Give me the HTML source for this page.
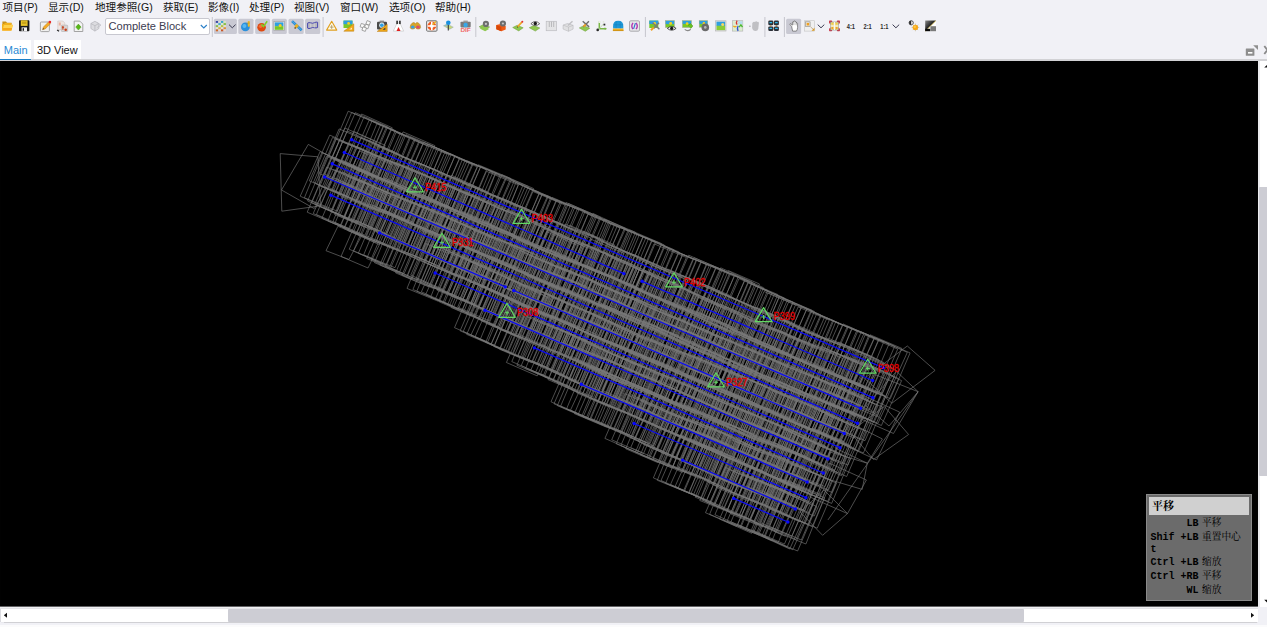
<!DOCTYPE html>
<html lang="zh"><head><meta charset="utf-8"><title>Main</title>
<style>
*{box-sizing:border-box;margin:0;padding:0}
html,body{width:1267px;height:627px;overflow:hidden;background:#f1f1f6}
body{position:relative;font-family:"Liberation Sans","Noto Sans CJK SC",sans-serif;font-size:11px;color:#1a1a1a}
.abs{position:absolute}
.menu span{position:absolute;top:0.3px;height:14px;line-height:14px;white-space:nowrap;font-size:10.6px;color:#111}
.cv{position:absolute;left:0;top:61px}
.tb{position:absolute;left:0;top:0;z-index:3}
.sep{position:absolute;top:18px;width:1px;height:17px;background:#c4c4cc}
.combo{position:absolute;left:105px;top:18px;width:105px;height:17px;background:#fff;border:1px solid #c8c8d0;border-radius:2px;font-size:11.1px;line-height:15.5px;padding-left:2.5px;color:#3c3c50}
.tab1{position:absolute;left:0;top:40px;width:31.3px;height:20.2px;background:#fff;border-bottom:1.5px solid #1a7fc8;color:#2a8ad4;font-size:11px;line-height:19.4px;padding-top:1px;text-align:center}
.tln{position:absolute;left:0;top:59.4px;width:1267px;height:1.6px;background:#d2d2d5}
.tab2{position:absolute;left:33.8px;top:40px;width:47px;height:19.2px;background:#fff;font-size:11px;line-height:19.4px;padding-top:1px;text-align:center;color:#111}
.vsb{position:absolute;left:1258px;top:61px;width:9px;height:545.5px;background:#fff;border-left:2px solid #ececef}
.vth{position:absolute;left:1259.3px;top:187.4px;width:8px;height:289px;background:#cdcdd4;border-radius:1px 0 0 1px}
.hsb{position:absolute;left:0;top:606.5px;width:1258px;height:2.2px;background:linear-gradient(#f6f6f8,#dedee2)}
.hbl{position:absolute;left:0;top:625px;width:1267px;height:2px;background:#fbfbfc}
.htr{position:absolute;left:0.8px;top:608.6px;width:1257px;height:13.2px;background:#fff;box-shadow:0 0.6px 0.8px #d0d0d4,-0.8px 0 0 #d8d8dc}
.hth{position:absolute;left:227.6px;top:608.8px;width:796px;height:12.8px;background:#cdcdd4;border-radius:1px}
.tip{position:absolute;left:1146px;top:494px;width:106px;height:107px;background:#6b6b6b;border:1px solid #8a8a8a;font-family:"Liberation Mono","Noto Serif CJK SC",monospace;font-size:10px;font-weight:bold;color:#000}
.tip .h{position:absolute;left:2px;top:2px;width:100px;height:18px;background:#d0d0d0;font-weight:bold;font-size:11px;line-height:18px;padding-left:3px;font-family:"Liberation Serif","Noto Serif CJK SC",serif}
.tip div.r{position:absolute;left:3.5px;white-space:pre;line-height:12px}
.tip .c{font-weight:normal;font-size:9.7px;margin-left:3.5px}
</style></head><body>

<div class="menu">
<span style="left:2.5px">项目(P)</span>
<span style="left:48px">显示(D)</span>
<span style="left:95px">地理参照(G)</span>
<span style="left:163px">获取(E)</span>
<span style="left:208px">影像(I)</span>
<span style="left:249px">处理(P)</span>
<span style="left:294px">视图(V)</span>
<span style="left:340px">窗口(W)</span>
<span style="left:389px">选项(O)</span>
<span style="left:435px">帮助(H)</span>
</div>
<svg class="tb" width="1267" height="60" viewBox="0 0 1267 60">
<rect x="211.8" y="17" width="1" height="20" fill="#c6c6ce"/>
<rect x="322.6" y="17" width="1" height="20" fill="#c6c6ce"/>
<rect x="475.3" y="17" width="1" height="20" fill="#c6c6ce"/>
<rect x="644.9" y="17" width="1" height="20" fill="#c6c6ce"/>
<rect x="764.4" y="17" width="1" height="20" fill="#c6c6ce"/>
<rect x="783.9" y="17" width="1" height="20" fill="#c6c6ce"/>
<rect x="213.9" y="18.7" width="23.0" height="15.2" rx="1.5" fill="#c9c9d3"/>
<rect x="238.3" y="18.7" width="15.2" height="15.2" rx="1.5" fill="#c9c9d3"/>
<rect x="255.2" y="18.7" width="14.8" height="15.2" rx="1.5" fill="#c9c9d3"/>
<rect x="271.9" y="18.7" width="14.9" height="15.2" rx="1.5" fill="#c9c9d3"/>
<rect x="288.5" y="18.7" width="15.2" height="15.2" rx="1.5" fill="#c9c9d3"/>
<rect x="305.1" y="18.7" width="15.1" height="15.2" rx="1.5" fill="#c9c9d3"/>
<rect x="786.1" y="18.7" width="15.0" height="15.2" rx="1.5" fill="#c9c9d3"/>
<g transform="translate(2.0 20.5)"><path d="M0.4 1h3.6l1 1.2h4.6v2H0.4z" fill="#c8901a"/><path d="M0 10V3.6h2l1-1h6.3v1.6h1.6L9.4 10z" fill="#f2b21c"/><path d="M0.3 10L2 4.6h9L9.3 10z" fill="#ffd24e"/><path d="M0.3 10L1.2 7.4h9L9.3 10z" fill="#f6a81a"/></g>
<g transform="translate(18.8 20.0)"><rect x="0.2" y="0.3" width="10.4" height="11" rx="0.8" fill="#1c1c1c"/><rect x="2" y="0.3" width="6.8" height="5.6" fill="#e8c428"/><rect x="3.2" y="1.6" width="4.4" height="2.4" fill="#c8a41c"/><rect x="2.8" y="7.4" width="5.4" height="3.9" fill="#f2f2f2"/><rect x="3.8" y="8.2" width="1.4" height="2.6" fill="#1c1c1c"/></g>
<g transform="translate(39.9 20.5)"><rect x="0.5" y="1.5" width="9" height="9.6" rx="1" fill="#f0f0f0" stroke="#9c9c9c" stroke-width="0.9"/><path d="M2.6 9.2L3.4 6.6L8.6 1.4L10.6 3.2L5.4 8.4Z" fill="#f2aa28" stroke="#b87a18" stroke-width="0.4"/><circle cx="10" cy="1.6" r="1.3" fill="#e8282c"/><path d="M2.6 9.2L3.2 7.4L4.4 8.6Z" fill="#5a4a3a"/></g>
<g transform="translate(56.3 20.5)"><path d="M1.5 0.5h5l2 2V9h-7z" fill="#efe6e2" stroke="#c8bcb8" stroke-width="0.5"/><rect x="2.5" y="2" width="2" height="3" fill="#e8b0a0"/><rect x="5" y="4.6" width="6.4" height="6.4" rx="0.8" fill="#d8d4d4" stroke="#a8a4a4" stroke-width="0.5"/><path d="M6.6 5.6v3.6M5.6 6.8h2.2" stroke="#c8401a" stroke-width="1.1" fill="none"/><circle cx="9.4" cy="9.2" r="1.3" fill="#c8401a"/><path d="M0.8 9.4l2 1.4" stroke="#2a2a2a" stroke-width="1.2"/></g>
<g transform="translate(73.7 20.5)"><path d="M0.5 0.6h5.6l3 3V11H0.5z" fill="#f4f4f4" stroke="#9a9a9a" stroke-width="0.9"/><path d="M4.7 3.6L7.4 6.6L4.7 9.6L2 6.6Z" fill="#58b818" stroke="#3c8a10" stroke-width="0.4"/></g>
<g transform="translate(89.9 20.5)"><path d="M1 3L5 0.8L9 3V8L5 10.6L1 8Z" fill="#dcdce0" stroke="#b4b4ba" stroke-width="0.7"/><path d="M1 3L5 5.2L9 3M5 5.2V10.6" stroke="#b4b4ba" stroke-width="0.7" fill="none"/><path d="M7.4 2.2L11 4.6L7.4 7" fill="none" stroke="#c0c0c6" stroke-width="0.9"/></g>
<g transform="translate(215.8 21.0)"><rect x="0.00" y="0.00" width="2.3" height="1.9" fill="#3a48a8"/><rect x="2.60" y="0.00" width="2.3" height="1.9" fill="#d8d8dc"/><rect x="5.20" y="0.00" width="2.3" height="1.9" fill="#38a8c8"/><rect x="7.80" y="0.00" width="2.3" height="1.9" fill="#d8e8c8"/><rect x="0.00" y="2.10" width="2.3" height="1.9" fill="#d0e4e8"/><rect x="2.60" y="2.10" width="2.3" height="1.9" fill="#3cb4c8"/><rect x="5.20" y="2.10" width="2.3" height="1.9" fill="#dce8d0"/><rect x="7.80" y="2.10" width="2.3" height="1.9" fill="#88c040"/><rect x="0.00" y="4.20" width="2.3" height="1.9" fill="#8cc040"/><rect x="2.60" y="4.20" width="2.3" height="1.9" fill="#e0e0d8"/><rect x="5.20" y="4.20" width="2.3" height="1.9" fill="#b0c838"/><rect x="7.80" y="4.20" width="2.3" height="1.9" fill="#e8e0c8"/><rect x="0.00" y="6.30" width="2.3" height="1.9" fill="#e8e4d0"/><rect x="2.60" y="6.30" width="2.3" height="1.9" fill="#e0b430"/><rect x="5.20" y="6.30" width="2.3" height="1.9" fill="#e8dcd0"/><rect x="7.80" y="6.30" width="2.3" height="1.9" fill="#e09030"/><rect x="0.00" y="8.40" width="2.3" height="1.9" fill="#d06828"/><rect x="2.60" y="8.40" width="2.3" height="1.9" fill="#e8d8d0"/><rect x="5.20" y="8.40" width="2.3" height="1.9" fill="#c85828"/><rect x="7.80" y="8.40" width="2.3" height="1.9" fill="#e8d4d0"/></g>
<g transform="translate(240.2 20.5)"><circle cx="5.2" cy="6.4" r="4.4" fill="#2a90dc"/><circle cx="4.2" cy="5.4" r="2" fill="#58b8f0"/><rect x="7.6" y="0.6" width="2" height="5.6" rx="0.6" fill="#e8b82c"/><path d="M6.4 2.6h3" stroke="#b88a1c" stroke-width="0.6"/></g>
<g transform="translate(256.8 20.5)"><circle cx="4.8" cy="6.8" r="4.3" fill="#e04a10"/><circle cx="3.8" cy="5.8" r="1.8" fill="#f07038"/><path d="M4.6 3.8l2 2.2L10.4 0.8" fill="none" stroke="#7cd028" stroke-width="1.5"/></g>
<g transform="translate(273.6 20.8)"><rect x="0.3" y="0.8" width="10.4" height="9" fill="#e8e8e8" stroke="#9a9a9a" stroke-width="0.6"/><rect x="1.2" y="1.6" width="8.6" height="4" fill="#2f9fe0"/><rect x="1.2" y="5.4" width="8.6" height="3.6" fill="#78c828"/><circle cx="6.6" cy="4.6" r="1.5" fill="#f4d020"/></g>
<g transform="translate(290.6 20.5)"><path d="M1.4 0.6L11 9.8" stroke="#2a8cd4" stroke-width="2.6"/><path d="M1.4 0.6L11 9.8" stroke="#58b0e8" stroke-width="0.8"/><rect x="4.4" y="4" width="3.2" height="3.2" transform="rotate(45 6 5.6)" fill="#e8b020"/><circle cx="4.6" cy="7.4" r="0.9" fill="#7a5a20"/></g>
<g transform="translate(307.0 20.5)"><path d="M0.6 2.6Q2 1.6 3.8 2.4T7.4 2.2T10.6 1.8V7Q9 7.8 7.4 7.2T3.8 7.6T0.6 7.6Z" fill="#b8b8c0" stroke="#4a48b0" stroke-width="1"/><path d="M3.8 3v4M7.2 3v4" stroke="#e8e8e8" stroke-width="0.6"/></g>
<g transform="translate(326.2 20.5)"><path d="M5.5 0.8L10.6 9.6H0.4Z" fill="#fffbe8" stroke="#e0a020" stroke-width="1.1" stroke-linejoin="round"/><path d="M5.5 4.4v4M3.6 6.6h3.8" stroke="#a89058" stroke-width="0.8"/></g>
<g transform="translate(343.2 20.2)"><rect x="0.3" y="0.4" width="9" height="7.4" fill="#78c828"/><rect x="0.3" y="0.4" width="9" height="3.6" fill="#2f9fe0"/><circle cx="5.4" cy="3.2" r="1.4" fill="#f4d020"/><path d="M0.6 11L10.6 3.6V11Z" fill="#f0a818" stroke="#b87a10" stroke-width="0.5"/><path d="M6 9.4L8.8 7.2V9.4Z" fill="#fff0c0"/></g>
<g transform="translate(359.8 20.5)"><g fill="#fafafa" stroke="#8c8c8c" stroke-width="0.7"><rect x="6.6" y="0.6" width="3.6" height="3.6" transform="rotate(20 8.4 2.4)"/><rect x="0.8" y="3.4" width="3.6" height="3.6" transform="rotate(20 2.6 5.2)"/><rect x="5.2" y="4.2" width="3.6" height="3.6" transform="rotate(20 7 6)"/><rect x="2.6" y="6.8" width="3.6" height="3.6" transform="rotate(20 4.4 8.6)"/></g></g>
<g transform="translate(376.6 20.2)"><rect x="0.4" y="1.6" width="10" height="7.6" rx="1" fill="#4a4a4a"/><rect x="3" y="0.4" width="4.4" height="2" fill="#8a8a8a"/><circle cx="5.2" cy="5" r="2.6" fill="#d8e8f0"/><circle cx="5.2" cy="5" r="1.8" fill="#2f9fe0"/><path d="M0.6 11.2L10.6 4V11.2Z" fill="#f0a818" stroke="#b87a10" stroke-width="0.5"/><path d="M6 9.6L8.8 7.4V9.6Z" fill="#3a3a3a"/></g>
<g transform="translate(392.9 20.5)"><path d="M4.2 2.6L0.4 10.6h10.4L7 2.6z" fill="#ffffff" stroke="#b8b8b8" stroke-width="0.5"/><rect x="3.4" y="0.2" width="1.6" height="3.4" fill="#2a2a2a"/><rect x="6.2" y="0.2" width="1.6" height="3.4" fill="#2a2a2a"/><path d="M5.6 6.6L7.6 10.6H3.6Z" fill="#e02020"/></g>
<g transform="translate(409.8 22.1)"><path d="M0.4 5.4Q0.2 2.6 2.6 0.8Q4.4 -0.2 5.6 1.6Q6.8 -0.2 8.6 0.8Q11 2.6 10.8 5.4Q10.6 7 8.4 7Q6.4 7 5.6 5.4Q4.8 7 2.8 7Q0.6 7 0.4 5.4Z" fill="#d8a428" stroke="#a87a18" stroke-width="0.5"/><ellipse cx="3" cy="4.8" rx="1.9" ry="1.5" fill="#38a0e0"/><ellipse cx="8.2" cy="4.8" rx="1.9" ry="1.5" fill="#e04868"/></g>
<g transform="translate(426.1 20.2)"><rect x="0.5" y="0.6" width="10.4" height="10.4" rx="1" fill="#f0f0f0" stroke="#707070" stroke-width="1"/><circle cx="5.7" cy="5.8" r="3.2" fill="none" stroke="#f05a20" stroke-width="2.4"/><path d="M5.7 1.6v8.4M1.5 5.8h8.4" stroke="#ffffff" stroke-width="1.6"/><path d="M6.4 4.6L9.8 1.2" stroke="#e8b020" stroke-width="1.4"/></g>
<g transform="translate(443.1 20.2)"><path d="M0.4 5.6L4 3.8L10.2 7L6.6 9Z" fill="#c8d878" stroke="#98a8a8" stroke-width="0.5"/><path d="M0.6 5.6L3.6 4.2L5 6.4Z" fill="#88b8d8"/><path d="M5.2 4v6.4" stroke="#3a3a3a" stroke-width="1.1"/><circle cx="5.2" cy="2.6" r="2.3" fill="#1890e0"/></g>
<g transform="translate(460.2 20.0)"><rect x="0.3" y="1.8" width="10.2" height="5.6" rx="0.8" fill="#7a7a7a"/><rect x="3.2" y="0.6" width="4.4" height="1.8" fill="#9a9a9a"/><circle cx="5.4" cy="5" r="2.2" fill="#38a8e8"/><text x="0.2" y="11.6" font-family="'Liberation Sans',sans-serif" font-weight="bold" font-size="5.6" fill="#f06a6a" textLength="10.4" lengthAdjust="spacingAndGlyphs">DIF</text></g>
<g transform="translate(479.1 20.5)"><path d="M0 6.2L4.5 4L10.5 6.5L6 9.6Z" fill="#8fc850" stroke="#6a9a3a" stroke-width="0.5"/><path d="M0.6 8L5 6L10 8.4L6 10.8Z" fill="#8fc850"/><circle cx="6.8" cy="3.4" r="3.1" fill="#6e6e6e"/><circle cx="6.8" cy="3.4" r="1.1" fill="#c8c8c8"/></g>
<g transform="translate(495.9 20.5)"><path d="M0.4 4.6L4.6 3.6L9.8 5.4V9L5.4 10.8L0.4 8.8Z" fill="#f05a14"/><path d="M0.4 4.6L5.4 6.4V10.8L0.4 8.8Z" fill="#d84808"/><circle cx="7" cy="3" r="3.1" fill="#6e6e6e"/><circle cx="7" cy="3" r="1.1" fill="#c8c8c8"/></g>
<g transform="translate(512.7 20.5)"><path d="M0 7L4.5 4.8L10.5 7.3L6 10.4Z" fill="#8fc850" stroke="#6a9a3a" stroke-width="0.5"/><path d="M4.8 6.4L9.2 1.6" stroke="#f0a828" stroke-width="1.7"/><circle cx="9.6" cy="1.2" r="1" fill="#e03030"/><path d="M4.2 7.2l0.4-1.4l1 1z" fill="#4a3a2a"/></g>
<g transform="translate(529.3 20.5)"><path d="M0 7.2L4.5 5L10.5 7.5L6 10.6Z" fill="#8fc850" stroke="#6a9a3a" stroke-width="0.5"/><path d="M1.6 3.2Q6 -1.2 10.4 3.2Q6 7 1.6 3.2Z" fill="#f4f4f4" stroke="#3a3a3a" stroke-width="0.7"/><circle cx="6" cy="3" r="1.7" fill="#1a1a1a"/></g>
<g transform="translate(545.9 20.8)"><rect x="0.3" y="0.5" width="10.4" height="9.4" fill="#e4e4e6" stroke="#bcbcc0" stroke-width="0.7"/><path d="M3.4 0.8v5.4M5.6 0.8v5.4M7.8 0.8v5.4" stroke="#b4b4b8" stroke-width="0.9"/></g>
<g transform="translate(562.5 20.5)"><path d="M0.6 4.6L5 3L10.6 4.8V8.6L6 10.8L0.6 8.6Z" fill="#e0e0e2" stroke="#b8b8bc" stroke-width="0.6"/><path d="M0.6 4.6L6 6.6L10.6 4.8M6 6.6V10.8" stroke="#b8b8bc" stroke-width="0.6" fill="none"/><path d="M5.4 5L10 0.8" stroke="#c0c0c4" stroke-width="1.5"/></g>
<g transform="translate(579.3 20.5)"><path d="M0 7.4L4.5 5.2L10.5 7.7L6 10.8Z" fill="#8fc850" stroke="#6a9a3a" stroke-width="0.5"/><path d="M3.4 0.8L9.8 6.4M9.6 0.8L4 6.4" stroke="#6e6e6e" stroke-width="1.4"/><path d="M4.2 6.2L6.4 4" stroke="#f0a020" stroke-width="1.8"/></g>
<g transform="translate(595.9 20.5)"><path d="M3.4 0.8v7.4h7" fill="none" stroke="#7ab848" stroke-width="1.5"/><path d="M3.4 8.2L7.4 3.6" stroke="#b8d8a0" stroke-width="0.8"/><circle cx="3.4" cy="1.4" r="1.2" fill="#e8f0e0"/><circle cx="7.6" cy="1.4" r="0.9" fill="#e0e8d8"/><rect x="7.6" y="3.2" width="1.8" height="1.8" fill="#2a2a2a"/><circle cx="1.8" cy="9.4" r="1.3" fill="#2a2a2a"/><path d="M8.8 6.8L10.8 8.2L8.8 9.6Z" fill="#7ab848"/></g>
<g transform="translate(612.7 20.2)"><path d="M0.4 8.4V6Q0.4 0.6 5.5 0.6T10.6 6V8.4Z" fill="#1e98d8"/><path d="M0.4 4.6h10.2M3.4 1.2v7M7.6 1.2v7" stroke="#1478b0" stroke-width="0.4"/><rect x="0.2" y="8.4" width="10.6" height="2.4" fill="#f0b020"/><path d="M0.2 10.4h10.6" stroke="#b88010" stroke-width="0.6"/></g>
<g transform="translate(629.0 20.2)"><rect x="0.5" y="0.6" width="10" height="10.4" rx="1.2" fill="#e6e6e8" stroke="#a4a4a8" stroke-width="0.9"/><path d="M4 2.6Q1.6 5.8 4 9M7 2.6Q9.6 5.8 7 9" fill="none" stroke="#b030b0" stroke-width="1.3"/><path d="M6.4 3L4.6 8.6" stroke="#2a70d0" stroke-width="1.1"/></g>
<g transform="translate(649.0 20.2)"><rect x="0.3" y="0.4" width="9" height="7.4" fill="#78c828"/><rect x="0.3" y="0.4" width="9" height="3.4" fill="#2f9fe0"/><circle cx="5.6" cy="3.2" r="1.4" fill="#f4d020"/><path d="M3.6 2.6L10.4 9M10 2.6L4.6 8.2" stroke="#7a7a7a" stroke-width="1.5"/><path d="M2 10L4.8 7.2" stroke="#f0a020" stroke-width="2"/></g>
<g transform="translate(665.1 20.2)"><rect x="0.3" y="0.4" width="9" height="7" fill="#78c828" stroke="#a8a8a8" stroke-width="0.5"/><rect x="0.6" y="0.7" width="8.4" height="3.2" fill="#2f9fe0"/><circle cx="5.6" cy="3.2" r="1.4" fill="#f4d020"/><path d="M2.2 8.2Q6.6 4.4 11 8.2Q6.6 11.8 2.2 8.2Z" fill="#f4f4f4" stroke="#2a2a2a" stroke-width="0.8"/><circle cx="6.6" cy="8.2" r="1.6" fill="#1a1a1a"/></g>
<g transform="translate(682.1 20.2)"><rect x="0.3" y="0.4" width="9" height="7" fill="#78c828" stroke="#a8a8a8" stroke-width="0.5"/><rect x="0.6" y="0.7" width="8.4" height="3" fill="#2f9fe0"/><circle cx="5" cy="3.4" r="1.3" fill="#f4d020"/><path d="M6 5.4L8.4 3.4L10.8 5.8L8.6 8.4" fill="#68c020" stroke="#489010" stroke-width="0.5"/><path d="M2.6 9.2Q5.6 11.6 8.6 9" fill="none" stroke="#8a8a8a" stroke-width="1.2"/></g>
<g transform="translate(698.9 20.2)"><rect x="0.3" y="0.4" width="8.4" height="6.6" fill="#78c828" stroke="#a8a8a8" stroke-width="0.5"/><rect x="0.6" y="0.7" width="7.8" height="3" fill="#2f9fe0"/><circle cx="5" cy="3.2" r="1.3" fill="#f4d020"/><circle cx="6.4" cy="7.2" r="3.8" fill="#6a6a6a"/><circle cx="6.4" cy="7.2" r="1.3" fill="#b8b8b8"/></g>
<g transform="translate(715.3 20.5)"><rect x="0.3" y="0.3" width="10.4" height="10.2" fill="#e0e0e0" stroke="#b0b0b0" stroke-width="0.6"/><rect x="1.2" y="1.2" width="8.6" height="4.4" fill="#2f9fe0"/><rect x="1.2" y="5.2" width="8.6" height="4.4" fill="#88cc38"/><circle cx="7.4" cy="4" r="1.5" fill="#f4d860"/></g>
<g transform="translate(732.1 20.2)"><rect x="0.3" y="0.5" width="10.4" height="10.4" fill="#dcecd0" stroke="#b0b0b0" stroke-width="0.6"/><rect x="6" y="1" width="4.4" height="3" fill="#b8dcf0"/><path d="M5 0.4Q3.6 2.4 5 4.4" fill="none" stroke="#d83030" stroke-width="1.2"/><path d="M6.2 5.6Q4.4 8 6 10.8" fill="none" stroke="#3050d0" stroke-width="1.2"/><path d="M1.2 5.6Q2.6 7.4 4.4 6" fill="none" stroke="#f0a820" stroke-width="1.3"/><path d="M7 7L8.8 4.6L10.4 7" fill="none" stroke="#48b830" stroke-width="1.3"/></g>
<g transform="translate(748.9 20.5)"><path d="M3.4 2.6Q5 0.4 6 1.6Q7.4 0 8.4 1.4Q9.8 0.6 10 2.6L9.4 8.2Q8.8 10.6 6.4 10.4Q4 10.4 3.2 7.4Z" fill="#c0c0c4"/><circle cx="1" cy="5.8" r="0.8" fill="#a8a8ac"/></g>
<g transform="translate(768.1 20.2)"><path d="M2.7 2.7H8.3V8.5H2.7Z" fill="none" stroke="#f0a020" stroke-width="0.8"/><rect x="0.2" y="0.4" width="5" height="4.6" rx="1.2" fill="#2c3038"/><rect x="1.3" y="1.7" width="2.8" height="1.4" rx="0.5" fill="#30b8e8"/><rect x="5.8" y="0.4" width="5" height="4.6" rx="1.2" fill="#2c3038"/><rect x="6.9" y="1.7" width="2.8" height="1.4" rx="0.5" fill="#30b8e8"/><rect x="0.2" y="6.2" width="5" height="4.6" rx="1.2" fill="#2c3038"/><rect x="1.3" y="7.5" width="2.8" height="1.4" rx="0.5" fill="#30b8e8"/><rect x="5.8" y="6.2" width="5" height="4.6" rx="1.2" fill="#2c3038"/><rect x="6.9" y="7.5" width="2.8" height="1.4" rx="0.5" fill="#30b8e8"/></g>
<g transform="translate(789.0 20.5)"><path d="M2.6 5.8L1 4.2Q0.6 3 1.8 3.2L3.4 4.6V1.6Q4 0.6 4.6 1.6V0.9Q5.4 0 6 0.9V1.4Q6.8 0.6 7.4 1.6V2.6Q8.2 2 8.6 3V7Q8.4 9.4 7.4 10.6H3.6Q3.2 8.6 2.6 5.8Z" fill="#ffffff" stroke="#4a4a4a" stroke-width="0.6"/><path d="M4.6 1.8V4.6M6 1.4V4.6M7.4 2V4.8" stroke="#7a7a7a" stroke-width="0.4"/></g>
<g transform="translate(804.1 20.2)"><rect x="0.4" y="0.5" width="10" height="10.4" fill="#f0f0f0" stroke="#c4c4c4" stroke-width="0.6"/><rect x="1.2" y="1.6" width="4.8" height="4.6" fill="#e8e0d0" stroke="#8a8a8a" stroke-width="0.6"/><rect x="2.6" y="2.8" width="2.4" height="2.4" fill="#f0a020"/><path d="M10.4 7.6V10.6H7.4Z" fill="#d89820"/><path d="M6.4 6.6L9 9" stroke="#b8a078" stroke-width="0.8"/></g>
<g transform="translate(828.9 20.2)"><g fill="#c83040"><rect x="0.2" y="0.4" width="3" height="3" rx="0.6"/><rect x="8" y="0.4" width="3" height="3" rx="0.6"/><rect x="0.2" y="8" width="3" height="3" rx="0.6"/><rect x="8" y="8" width="3" height="3" rx="0.6"/></g><rect x="1.6" y="1.8" width="8" height="8" fill="#ecd890" stroke="#8a8a8a" stroke-width="0.6"/><path d="M5.6 1.8v8M1.6 5.8h8" stroke="#f8f8f0" stroke-width="1"/><circle cx="3.4" cy="7.8" r="1.1" fill="#f0a020"/><circle cx="7.8" cy="7.8" r="1.1" fill="#f0a020"/><circle cx="3.4" cy="3.6" r="1" fill="#f4d040"/><circle cx="7.8" cy="3.6" r="1" fill="#f4d040"/></g>
<g transform="translate(908.4 20.2)"><circle cx="2.8" cy="2.6" r="2.1" fill="#f4f4f4" stroke="#2a2a2a" stroke-width="0.8"/><path d="M2.8 0.5A2.1 2.1 0 0 0 2.8 4.7Z" fill="#2a2a2a"/><path d="M7 3.4v7.6M3.2 7.2h7.6M4.3 4.5l5.4 5.4M9.7 4.5L4.3 9.9" stroke="#c8c0a0" stroke-width="0.9"/><circle cx="7" cy="7.2" r="2.7" fill="#f8a818"/><circle cx="6.4" cy="6.6" r="1.2" fill="#fcc848"/></g>
<g transform="translate(925.0 20.2)"><defs><linearGradient id="cg" x1="0" y1="0" x2="1" y2="1"><stop offset="0" stop-color="#8a8a8a"/><stop offset="0.5" stop-color="#1a1a1a"/><stop offset="1" stop-color="#000"/></linearGradient></defs><rect x="0.2" y="0.4" width="10.8" height="10.6" fill="#fff"/><path d="M0.2 0.4H11L0.2 11Z" fill="url(#cg)"/><path d="M0.2 11L11 0.4" stroke="#e8c850" stroke-width="0.7"/><rect x="5.4" y="6" width="5.6" height="5" fill="#7a7a7a"/><rect x="0.2" y="8.6" width="5" height="2.4" fill="#0a0a0a"/></g>
<path d="M200.8 25l3 3l3-3" fill="none" stroke="#2a7fc8" stroke-width="1.1"/>
<path d="M229.0 24.6l3.3 3.2l3.3-3.2" fill="none" stroke="#3a3a50" stroke-width="1"/>
<path d="M817.7 24.6l3.3 3.2l3.3-3.2" fill="none" stroke="#3a3a50" stroke-width="1"/>
<path d="M892.6 24.6l3.3 3.2l3.3-3.2" fill="none" stroke="#3a3a50" stroke-width="1"/>
<text x="846.8" y="29" font-family="'Liberation Sans',sans-serif" font-weight="bold" font-size="6.6" fill="#2a2a2a" textLength="8.2" lengthAdjust="spacingAndGlyphs">4:1</text>
<text x="863.5" y="29" font-family="'Liberation Sans',sans-serif" font-weight="bold" font-size="6.6" fill="#2a2a2a" textLength="8.2" lengthAdjust="spacingAndGlyphs">2:1</text>
<text x="880.3" y="29" font-family="'Liberation Sans',sans-serif" font-weight="bold" font-size="6.6" fill="#2a2a2a" textLength="8.2" lengthAdjust="spacingAndGlyphs">1:1</text>
<rect x="1245.8" y="48.4" width="8.6" height="7.4" rx="0.6" fill="#8e8e8e"/><rect x="1248" y="52" width="4.4" height="1.6" fill="#fff"/><path d="M1253.2 45.3h4.8v4.6z" fill="#8e8e8e"/>
<path d="M1264.3 46l6 8m0-8l-6 8" stroke="#8a8a8a" stroke-width="1.8"/>
</svg>
<div class="combo">Complete Block</div>
<div class="tln"></div><div class="tab1">Main</div><div class="tab2">3D View</div>
<svg class="cv" width="1258" height="545.6" viewBox="0 61 1258 545.6">
<rect x="0" y="61" width="1258" height="545.6" fill="#000"/>
<g fill="none" stroke="#787878" stroke-width="1.0" stroke-opacity="0.64">
<path d="M351.7 112.4L383.7 126.1L364.5 170.7L332.5 157.0ZM361.6 114.0L392.3 127.8L371.7 173.5L341.1 159.7ZM369.2 120.1L400.0 133.6L380.4 178.0L349.6 164.5ZM376.9 123.9L409.4 137.5L390.2 183.1L357.8 169.5ZM386.3 127.2L418.9 141.2L399.2 187.1L366.6 173.1ZM396.0 132.5L428.7 146.4L409.7 191.1L377.0 177.2ZM405.9 134.6L437.0 148.0L417.8 192.5L386.7 179.1ZM413.7 140.1L447.0 153.9L428.3 199.1L394.9 185.3ZM423.5 142.2L455.0 155.8L435.9 200.3L404.4 186.7ZM432.2 146.2L465.0 160.6L444.9 206.5L412.0 192.2ZM442.1 150.9L472.9 164.4L453.4 208.7L422.6 195.2ZM449.5 153.3L480.5 166.9L460.4 212.7L429.4 199.1ZM459.5 158.0L492.9 172.4L473.3 217.8L439.9 203.4ZM467.3 160.8L500.1 175.1L480.4 220.4L447.5 206.1ZM478.3 164.8L510.7 178.4L491.6 223.7L459.3 210.1ZM486.5 171.3L518.3 184.9L499.2 229.8L467.4 216.2ZM495.6 172.7L528.3 186.5L508.7 232.8L476.0 218.9ZM506.5 177.8L539.8 192.4L519.9 238.1L486.6 223.5ZM515.9 182.6L548.3 196.2L529.5 241.1L497.1 227.5ZM525.0 187.0L556.5 200.8L536.8 245.6L505.4 231.8ZM532.9 191.5L566.3 205.6L547.1 251.1L513.7 237.0ZM542.3 194.1L574.6 208.0L555.1 253.1L522.8 239.1ZM552.1 197.4L585.0 211.5L565.2 257.7L532.3 243.6ZM560.2 202.0L593.5 216.0L573.9 262.3L540.6 248.3ZM568.5 203.5L601.0 217.7L581.2 263.5L548.6 249.4ZM577.6 208.3L609.8 222.0L590.0 268.4L557.9 254.7ZM587.9 214.2L619.8 228.0L600.7 272.5L568.7 258.7ZM595.0 216.6L627.9 230.8L608.5 275.8L575.6 261.5ZM604.5 219.2L635.5 232.3L616.1 278.1L585.1 265.0ZM611.1 223.2L642.9 236.6L623.8 282.2L592.0 268.9ZM620.7 226.7L652.2 240.5L632.2 286.2L600.7 272.4ZM629.5 229.9L661.6 243.6L641.9 289.9L609.8 276.2ZM636.9 234.5L670.0 248.7L650.4 294.5L617.3 280.3ZM646.0 237.6L679.1 252.0L659.1 298.0L626.1 283.6ZM654.0 243.8L686.4 257.5L667.4 302.5L635.0 288.9ZM664.6 246.8L696.1 260.3L676.9 305.0L645.4 291.4ZM672.9 250.3L706.3 264.1L687.5 309.6L654.1 295.8ZM682.8 254.2L716.0 268.0L697.4 312.9L664.2 299.2ZM694.1 257.8L725.0 270.8L706.2 315.6L675.2 302.6ZM701.3 262.2L734.2 276.3L714.7 321.7L681.8 307.6ZM711.6 265.3L744.9 280.3L724.6 325.3L691.4 310.4ZM720.7 267.8L752.1 281.9L731.8 327.1L700.4 313.0ZM728.4 270.6L759.5 284.0L739.6 330.1L708.5 316.7ZM734.4 275.9L767.7 290.4L748.1 335.2L714.8 320.6ZM744.4 280.5L777.8 294.5L758.6 340.0L725.3 326.0ZM751.7 284.0L784.6 298.0L764.8 344.1L732.0 330.0ZM761.2 288.6L793.2 302.2L774.2 347.2L742.1 333.7ZM768.0 292.9L801.3 307.5L781.1 353.5L747.8 338.8ZM779.6 296.2L812.0 310.3L792.5 355.2L760.0 341.1ZM789.2 300.7L820.6 314.8L800.4 360.0L769.0 345.9ZM798.1 306.9L829.3 320.2L810.1 365.1L778.9 351.7ZM806.8 309.1L839.0 323.1L819.3 368.2L787.2 354.1ZM816.7 313.7L848.0 327.5L828.3 372.6L796.9 358.8ZM827.0 317.9L857.8 331.2L838.3 376.3L807.5 363.0ZM835.7 321.9L868.8 335.2L850.2 381.3L817.1 368.0ZM847.5 326.1L878.9 339.8L859.0 385.3L827.6 371.7ZM856.9 330.2L889.0 344.0L869.1 390.2L837.1 376.5ZM865.1 335.0L897.7 349.1L878.2 394.3L845.6 380.2ZM874.7 337.7L907.3 352.4L887.0 397.4L854.4 382.8Z"/>
<path d="M348.2 111.2L380.5 124.9L361.2 170.1L328.9 156.4ZM355.3 112.7L387.7 126.8L367.7 172.9L335.2 158.8ZM363.9 117.3L395.3 130.5L376.0 176.2L344.7 163.0ZM372.0 121.0L404.1 134.6L385.1 179.7L353.0 166.1ZM383.4 125.7L415.2 139.6L395.3 185.3L363.4 171.5ZM390.8 129.7L423.3 143.4L404.0 188.8L371.6 175.1ZM403.0 131.9L434.8 145.6L415.0 191.3L383.2 177.5ZM410.5 137.4L441.7 150.2L423.0 195.9L391.8 183.1ZM419.6 141.8L450.8 155.4L431.3 200.2L400.1 186.6ZM427.8 144.0L459.8 158.3L439.5 203.6L407.5 189.3ZM438.7 148.8L469.5 162.5L449.8 206.8L419.0 193.2ZM445.0 152.2L477.2 166.9L457.1 211.2L424.9 196.6ZM454.8 156.2L486.5 169.9L467.0 214.8L435.4 201.0ZM462.3 159.5L495.8 172.8L477.5 219.1L443.9 205.8ZM472.6 163.1L505.6 177.7L485.3 223.4L452.4 208.9ZM480.8 166.4L514.3 180.7L494.9 226.0L461.4 211.7ZM489.6 171.7L522.9 185.4L504.1 231.1L470.8 217.4ZM501.9 174.7L533.5 188.5L513.5 234.3L481.9 220.5ZM511.2 180.4L542.1 194.3L521.7 240.0L490.7 226.1ZM518.6 184.2L550.9 197.1L532.3 243.7L500.0 230.7ZM529.8 189.1L561.4 203.3L541.2 248.3L509.7 234.1ZM539.1 193.2L570.0 206.2L550.6 252.3L519.7 239.3ZM547.6 195.9L578.9 209.8L559.1 254.6L527.8 240.7ZM556.3 199.8L588.6 213.0L569.8 258.7L537.5 245.5ZM566.0 202.5L597.0 215.9L577.5 261.1L546.4 247.7ZM573.2 206.8L606.5 221.0L586.8 267.3L553.5 253.1ZM582.9 211.8L614.4 224.9L595.4 270.2L564.0 257.0ZM593.1 213.5L625.6 228.5L604.5 274.2L572.0 259.1ZM599.7 217.6L630.8 231.1L610.9 277.2L579.7 263.7ZM607.9 222.4L639.1 235.3L619.9 281.6L588.8 268.7ZM617.1 226.2L648.3 239.3L629.4 284.2L598.2 271.1ZM624.2 228.8L655.7 242.3L636.7 286.8L605.2 273.3ZM632.2 232.0L664.4 245.0L645.8 290.8L613.7 277.8ZM643.3 236.6L674.2 250.0L654.3 295.8L623.4 282.3ZM651.5 240.8L682.7 254.1L663.4 299.5L632.2 286.2ZM661.0 245.1L692.9 259.2L673.0 304.4L641.0 290.3ZM668.4 248.2L700.8 262.0L681.4 307.5L649.0 293.7ZM678.3 252.6L709.2 265.8L689.6 311.9L658.7 298.7ZM688.7 255.2L721.0 269.3L700.9 315.3L668.6 301.2ZM696.7 260.1L729.4 273.6L710.4 319.6L677.7 306.1ZM707.1 263.9L738.1 277.1L718.9 322.1L687.9 308.8ZM715.9 267.2L748.4 281.2L729.2 325.8L696.7 311.8ZM722.1 270.0L754.9 283.7L735.9 328.9L703.2 315.1ZM730.8 273.1L763.6 287.7L743.3 333.7L710.4 319.2ZM739.0 278.6L772.0 292.9L752.2 338.3L719.3 323.9ZM748.2 283.0L779.5 296.1L760.5 341.4L729.2 328.3ZM755.6 286.2L787.3 300.1L767.6 345.2L735.9 331.3ZM764.0 291.5L795.5 304.9L776.5 349.9L744.9 336.6ZM774.3 294.4L806.8 308.8L787.2 353.2L754.6 338.7ZM782.6 298.2L814.4 311.4L795.1 357.4L763.4 344.2ZM792.6 303.1L824.6 317.1L805.1 361.9L773.0 347.9ZM801.4 306.8L833.7 320.7L813.9 366.8L781.6 352.9ZM810.7 311.3L842.7 325.3L822.9 370.8L790.8 356.8ZM821.1 315.8L852.0 329.1L832.3 374.8L801.4 361.5ZM832.7 320.5L863.7 334.0L844.1 378.6L813.1 365.1ZM843.0 323.9L874.2 337.9L853.5 383.7L822.3 369.7ZM851.6 328.9L883.6 342.2L865.0 387.3L832.9 374.1ZM861.3 331.8L894.7 346.2L875.0 391.9L841.6 377.6ZM870.2 334.8L901.9 348.4L882.4 393.6L850.7 380.0ZM878.7 339.4L910.1 352.9L890.3 398.7L858.9 385.2Z"/>
<path d="M339.1 128.9L370.4 142.3L351.2 187.2L319.9 173.8ZM347.1 131.0L378.9 144.8L359.0 190.9L327.2 177.1ZM357.7 136.5L389.5 150.3L369.9 195.4L338.1 181.5ZM367.4 140.0L400.2 154.5L380.0 200.3L347.1 185.7ZM376.5 145.8L409.4 160.1L389.6 205.9L356.6 191.6ZM384.8 148.5L416.9 163.3L396.3 207.7L364.2 192.9ZM395.4 153.0L427.4 166.9L407.4 213.1L375.4 199.2ZM405.6 157.7L438.8 171.2L420.0 217.1L386.9 203.6ZM414.3 161.0L446.6 175.0L427.1 220.0L394.8 206.1ZM425.4 166.2L457.3 180.0L437.5 225.5L405.6 211.7ZM435.8 170.2L467.0 184.1L447.0 228.7L415.9 214.8ZM443.6 173.5L475.9 188.2L455.1 234.0L422.8 219.4ZM451.2 175.2L483.2 190.0L462.0 235.6L430.1 220.8ZM458.9 180.6L490.8 194.1L471.7 238.9L439.9 225.3ZM468.4 183.8L499.6 197.6L479.4 243.3L448.2 229.5ZM475.7 188.0L507.3 201.3L488.4 246.5L456.7 233.2ZM486.1 192.9L517.2 206.9L497.4 251.0L466.3 237.0ZM493.8 195.2L527.2 209.4L508.1 254.1L474.8 239.9ZM502.3 198.3L535.7 212.7L516.3 257.5L482.9 243.0ZM511.8 203.3L543.2 216.4L524.0 262.5L492.6 249.5ZM520.7 206.2L552.1 219.9L532.1 265.6L500.8 251.9ZM530.7 210.9L562.4 224.4L543.1 269.7L511.4 256.2ZM539.9 214.7L572.5 229.5L552.2 274.4L519.5 259.6ZM548.3 219.1L579.2 232.6L559.3 278.3L528.4 264.8ZM557.8 223.8L590.8 238.1L571.5 282.9L538.5 268.6ZM569.6 225.2L600.6 239.1L580.0 284.9L549.0 271.0ZM576.9 230.2L608.2 243.8L588.8 288.5L557.5 274.9ZM587.7 234.0L619.8 248.5L599.4 293.7L567.4 279.2ZM597.9 240.0L630.9 254.1L611.6 299.4L578.6 285.4ZM607.1 244.3L638.0 257.3L619.1 302.0L588.3 288.9ZM615.4 247.5L647.1 261.2L627.8 305.8L596.1 292.1ZM622.9 251.2L654.1 264.5L635.0 309.2L603.8 295.8ZM632.9 254.3L664.7 268.4L644.2 314.4L612.4 300.2ZM640.5 258.4L672.8 272.2L653.0 318.4L620.7 304.6ZM647.5 261.5L680.7 275.9L660.7 321.7L627.6 307.3ZM657.2 266.7L688.0 280.1L668.3 325.1L637.5 311.6ZM667.6 269.0L700.1 283.0L680.2 329.3L647.7 315.3ZM677.1 273.9L708.5 288.1L688.2 332.6L656.9 318.4ZM686.9 277.5L719.8 291.3L700.6 337.0L667.7 323.1ZM694.6 282.2L725.8 295.6L706.7 340.1L675.5 326.8ZM700.7 284.2L734.2 298.0L715.8 342.8L682.3 329.1ZM711.8 289.5L745.0 303.3L726.0 349.2L692.8 335.4ZM719.7 292.3L752.3 306.7L732.4 351.6L699.8 337.2ZM727.5 295.9L760.3 309.7L741.1 355.3L708.3 341.5ZM737.0 299.7L769.1 313.6L749.6 358.9L717.4 345.1ZM746.1 304.9L778.0 319.3L758.1 363.6L726.2 349.3ZM756.5 307.3L787.4 321.1L766.9 366.9L736.0 353.1ZM762.1 309.9L794.9 324.2L775.0 370.0L742.2 355.7ZM770.6 314.5L802.8 328.7L783.2 373.2L751.0 359.0ZM778.3 319.0L809.9 332.9L790.0 378.2L758.5 364.3ZM785.7 319.8L818.4 334.7L797.7 380.1L765.0 365.2ZM792.9 325.4L825.3 338.8L806.3 384.7L773.9 371.3ZM802.4 329.7L833.9 342.9L814.7 388.9L783.2 375.7ZM812.3 332.9L844.3 346.5L824.6 392.5L792.7 378.8ZM822.0 337.4L854.6 351.3L834.9 397.3L802.3 383.3ZM832.7 340.5L865.0 354.4L845.5 399.8L813.1 385.9ZM841.2 343.7L874.2 357.6L855.3 402.4L822.3 388.6ZM851.8 348.9L883.4 362.2L864.5 407.3L832.9 394.0ZM859.1 353.9L891.8 367.3L873.1 412.9L840.4 399.5Z"/>
<path d="M344.8 128.0L376.0 141.7L355.8 187.8L324.5 174.1ZM354.1 131.6L385.2 145.4L364.9 191.4L333.8 177.6ZM360.9 137.6L394.3 151.9L375.1 196.6L341.7 182.3ZM371.4 143.3L402.9 156.3L384.2 201.7L352.6 188.7ZM380.1 146.7L412.8 161.0L392.6 207.0L359.9 192.6ZM389.3 150.5L422.3 165.5L401.8 210.7L368.8 195.8ZM400.1 155.7L433.5 169.7L414.7 214.7L381.2 200.7ZM411.0 159.7L442.3 173.2L422.5 219.0L391.2 205.5ZM420.9 163.6L451.9 177.0L432.4 222.3L401.3 209.0ZM429.9 167.7L463.0 181.9L443.7 226.9L410.6 212.7ZM438.2 172.8L470.2 186.3L450.6 232.7L418.7 219.3ZM447.7 175.2L478.4 188.9L458.4 233.6L427.7 219.9ZM453.8 177.3L487.2 191.6L468.0 236.3L434.6 221.9ZM462.8 183.0L493.6 196.1L474.4 241.2L443.6 228.1ZM471.6 186.4L504.3 200.1L485.5 244.9L452.8 231.2ZM480.9 190.0L514.1 204.0L494.4 250.4L461.2 236.4ZM490.8 194.7L523.1 207.9L504.6 253.0L472.3 239.8ZM499.6 197.3L531.7 211.4L511.5 257.4L479.4 243.4ZM505.1 201.0L538.4 215.3L519.1 260.5L485.8 246.2ZM515.6 205.5L546.9 219.1L527.3 264.2L496.0 250.6ZM524.8 209.7L557.9 224.0L538.6 268.6L505.5 254.4ZM535.6 213.3L566.6 226.3L547.4 272.0L516.4 259.1ZM544.1 216.5L575.1 230.1L555.2 275.2L524.3 261.6ZM552.1 220.7L585.6 234.8L566.8 279.7L533.3 265.6ZM565.0 224.0L597.8 238.4L577.7 284.4L544.8 270.0ZM571.8 228.1L603.4 240.8L585.1 286.2L553.5 273.4ZM583.6 231.2L614.6 244.9L594.6 290.2L563.6 276.5ZM591.1 239.3L624.2 253.3L605.1 298.3L572.0 284.3ZM602.0 241.3L634.5 255.4L614.4 301.6L581.9 287.5ZM610.3 245.2L641.7 257.9L623.3 303.2L591.9 290.5ZM618.7 249.5L651.3 263.3L632.0 308.7L599.5 294.9ZM628.3 252.5L659.2 265.6L639.8 311.3L608.9 298.3ZM637.3 258.5L669.0 272.7L649.1 317.3L617.4 303.1ZM642.6 261.2L675.8 275.0L657.2 320.0L624.0 306.3ZM652.3 264.9L685.1 279.1L665.5 324.3L632.7 310.2ZM662.2 267.1L694.5 281.0L675.0 326.3L642.7 312.4ZM670.9 270.9L703.8 285.1L683.9 331.2L651.0 317.1ZM682.0 275.4L714.3 288.7L695.1 335.0L662.9 321.6ZM692.0 280.4L722.9 294.5L702.8 338.6L671.9 324.5ZM698.5 282.0L729.5 295.2L710.1 340.8L679.1 327.6ZM708.0 287.0L739.0 300.6L719.6 345.0L688.6 331.4ZM716.7 291.6L748.3 305.3L728.8 350.5L697.2 336.8ZM724.4 294.8L755.1 308.3L735.3 353.4L704.5 339.8ZM732.4 298.0L763.1 311.4L743.6 356.2L712.9 342.8ZM742.2 302.5L773.9 315.7L754.5 362.1L722.8 348.9ZM749.9 307.7L782.5 321.5L763.3 366.7L730.8 352.9ZM758.6 309.6L790.3 323.7L770.0 369.5L738.3 355.5ZM767.1 312.7L799.5 327.2L779.3 372.7L746.8 358.3ZM774.7 316.4L807.3 330.6L787.3 376.5L754.7 362.3ZM782.7 320.1L813.5 334.0L792.8 379.9L762.0 365.9ZM789.1 324.4L820.9 338.3L801.4 382.7L769.7 368.8ZM796.4 327.8L829.9 341.7L811.0 387.2L777.6 373.3ZM808.3 331.3L840.7 345.6L820.7 390.7L788.3 376.4ZM817.0 334.9L849.6 348.6L830.5 394.0L797.9 380.3ZM827.9 338.0L858.9 351.9L838.6 397.5L807.5 383.6ZM838.6 342.0L870.4 355.9L850.2 402.0L818.4 388.0ZM848.3 346.7L879.1 360.0L859.7 405.2L828.9 392.0ZM857.0 351.5L888.8 365.4L869.3 410.1L837.5 396.3ZM863.4 356.5L896.6 370.5L877.2 416.6L844.0 402.6Z"/>
<path d="M329.8 135.1L360.7 148.9L340.2 194.6L309.3 180.8ZM335.7 139.1L367.3 152.4L348.2 197.5L316.6 184.2ZM342.4 141.9L375.6 155.5L357.1 200.5L324.0 186.9ZM352.1 145.1L384.9 159.5L365.2 204.5L332.4 190.1ZM359.2 150.8L392.4 164.7L373.5 209.7L340.3 195.8ZM370.1 153.8L400.9 167.5L380.9 212.6L350.1 198.9ZM377.1 155.2L410.3 169.3L391.1 214.5L357.9 200.4ZM386.1 159.7L419.6 174.1L400.1 219.5L366.6 205.2ZM395.5 162.4L428.4 176.7L408.9 221.5L376.1 207.2ZM404.6 165.6L437.9 180.4L417.6 225.8L384.3 210.9ZM412.2 170.8L444.8 184.1L426.5 229.0L393.9 215.7ZM422.4 174.0L455.0 187.8L435.7 233.6L403.1 219.9ZM430.4 178.3L463.6 192.8L443.7 238.3L410.5 223.8ZM438.7 181.3L471.9 195.9L452.4 240.3L419.1 225.7ZM446.9 183.7L480.1 198.4L459.7 244.5L426.5 229.7ZM453.5 188.0L487.0 202.3L467.9 247.0L434.5 232.7ZM462.3 191.5L495.6 205.3L476.6 251.3L443.2 237.6ZM471.5 195.1L504.0 209.1L484.2 255.1L451.6 241.0ZM478.3 199.1L511.0 213.0L491.9 257.8L459.2 243.8ZM489.8 204.2L521.5 217.5L502.8 262.2L471.1 249.0ZM500.4 208.2L533.4 222.9L513.5 267.8L480.4 253.1ZM509.6 211.3L542.9 225.3L524.1 270.0L490.8 256.0ZM520.9 217.3L551.9 230.5L532.5 276.1L501.5 262.8ZM530.2 220.8L562.9 235.2L542.7 281.0L510.0 266.5ZM540.0 225.6L572.4 239.6L553.1 284.4L520.7 270.4ZM546.5 231.6L578.1 245.6L558.4 290.0L526.8 276.0ZM554.6 233.8L586.7 247.6L567.1 293.1L535.0 279.2ZM562.8 236.8L594.0 250.4L574.7 294.9L543.5 281.4ZM570.2 238.7L603.6 253.3L584.0 298.1L550.7 283.6ZM582.1 243.5L613.0 256.8L593.6 301.7L562.7 288.4ZM590.9 247.5L622.0 261.0L602.2 306.8L571.1 293.3ZM600.5 251.9L631.6 265.6L611.9 310.3L580.8 296.6ZM606.0 255.1L639.3 269.1L620.4 314.0L587.0 299.9ZM617.6 258.5L648.7 272.1L629.2 316.9L598.1 303.3ZM624.0 262.4L655.4 276.8L635.2 321.1L603.8 306.8ZM633.0 267.2L664.4 281.2L644.5 325.9L613.1 311.9ZM642.6 270.3L674.0 284.1L653.8 330.2L622.3 316.4ZM649.9 272.2L681.1 286.0L661.0 331.3L629.8 317.5ZM657.6 276.4L688.9 289.9L669.2 335.4L637.9 321.9ZM667.3 282.0L698.9 295.9L678.7 341.7L647.1 327.8ZM676.5 285.6L707.8 298.8L688.7 344.1L657.3 330.9ZM685.7 290.4L718.5 304.3L699.3 349.6L666.5 335.7ZM695.8 296.4L727.1 310.1L707.6 354.8L676.3 341.1ZM702.5 296.8L734.8 310.5L715.4 356.3L683.1 342.7ZM710.1 301.3L741.1 315.0L721.1 360.3L690.1 346.6ZM719.8 304.1L751.9 318.4L731.9 363.3L699.9 349.1ZM729.1 311.0L762.3 325.0L743.5 369.7L710.3 355.7ZM738.8 315.8L770.9 329.9L751.4 374.2L719.4 360.2ZM748.3 319.5L779.8 333.2L759.9 378.8L728.4 365.1ZM758.4 321.7L790.8 336.1L771.1 380.5L738.7 366.2ZM766.4 326.3L798.2 340.3L778.4 385.2L746.6 371.2ZM773.5 328.5L805.9 342.1L786.7 387.9L754.3 374.3ZM782.3 331.5L813.5 345.7L793.1 390.8L761.9 376.7ZM791.4 336.6L823.2 350.4L803.6 395.6L771.8 381.8ZM799.9 339.7L833.2 353.6L813.9 399.7L780.6 385.9ZM812.1 344.7L842.6 358.5L822.1 404.0L791.5 390.2ZM821.7 346.4L853.6 360.5L833.5 406.1L801.6 392.0ZM829.9 350.8L861.4 364.5L842.0 409.1L810.5 395.4ZM839.7 355.3L872.8 370.0L853.1 414.2L820.0 399.5ZM848.5 357.3L880.4 371.0L861.0 416.1L829.1 402.4ZM857.2 359.8L890.5 373.9L870.7 420.2L837.5 406.1ZM866.1 363.4L898.7 378.6L877.9 423.4L845.3 408.3Z"/>
<path d="M332.6 137.4L364.6 151.0L345.5 195.9L313.5 182.2ZM339.6 139.8L373.0 154.0L353.4 200.1L320.0 185.9ZM349.7 143.4L381.8 158.3L361.3 202.6L329.1 187.7ZM356.2 146.2L388.5 160.6L368.1 206.3L335.9 191.9ZM365.1 151.5L397.6 164.8L379.1 210.1L346.6 196.8ZM373.3 154.3L404.3 167.0L385.4 213.4L354.3 200.7ZM382.2 158.1L413.1 171.1L393.9 216.8L362.9 203.8ZM391.7 161.4L423.4 175.0L403.7 221.0L371.9 207.4ZM399.7 164.5L432.7 178.9L413.0 224.0L380.0 209.6ZM409.8 168.4L442.4 182.4L422.7 228.3L390.2 214.4ZM417.1 172.0L449.4 186.5L429.0 232.1L396.6 217.7ZM426.8 176.7L459.8 190.7L440.7 235.4L407.8 221.4ZM435.4 179.6L467.0 193.1L447.8 238.4L416.2 225.0ZM443.1 183.9L476.3 198.5L456.5 243.6L423.3 229.0ZM451.4 187.6L482.7 200.9L463.6 245.4L432.4 232.1ZM459.4 190.7L492.2 204.9L472.9 249.7L440.1 235.5ZM466.7 192.1L498.4 205.0L479.6 251.6L447.8 238.8ZM474.8 197.7L506.7 211.9L487.0 256.2L455.1 242.0ZM484.0 201.6L515.9 215.1L496.4 261.1L464.5 247.6ZM495.7 204.5L529.2 218.8L509.7 264.9L476.1 250.6ZM506.8 210.0L537.6 223.4L518.0 268.3L487.3 254.9ZM515.3 213.3L548.5 227.3L529.0 273.4L495.8 259.3ZM525.7 219.8L558.0 234.0L537.9 279.6L505.6 265.3ZM534.2 223.8L566.6 237.8L546.6 283.9L514.3 269.8ZM543.2 228.5L575.1 242.0L555.9 287.5L523.9 274.0ZM551.4 232.0L583.7 245.7L564.8 290.3L532.5 276.6ZM559.2 233.4L592.0 248.2L571.2 294.1L538.5 279.2ZM564.8 236.6L598.4 250.1L580.3 295.1L546.7 281.6ZM575.9 239.9L608.0 253.6L588.8 298.4L556.8 284.7ZM585.4 244.4L618.3 258.6L598.4 304.3L565.5 290.0ZM596.4 249.9L627.6 262.9L608.8 308.2L577.6 295.2ZM604.3 252.5L635.2 265.8L615.3 311.9L584.4 298.6ZM611.2 257.6L643.1 271.6L623.3 316.5L591.4 302.4ZM621.0 259.6L652.3 273.6L632.2 318.6L600.9 304.5ZM628.9 264.5L659.5 278.6L638.6 324.2L608.0 310.1ZM637.3 268.8L668.0 283.0L647.5 327.5L616.8 313.3ZM644.9 270.8L678.0 285.1L658.3 330.5L625.3 316.2ZM652.1 276.2L683.1 289.5L663.9 334.2L632.9 320.8ZM661.9 278.5L694.7 292.7L675.1 337.8L642.3 323.6ZM672.4 283.7L705.4 298.4L685.5 343.1L652.5 328.4ZM681.2 287.7L712.4 300.8L693.2 346.8L662.0 333.7ZM691.4 293.3L723.4 307.6L703.3 352.8L671.3 338.5ZM698.7 297.1L731.3 311.4L711.7 356.1L679.1 341.8ZM706.0 298.7L738.0 312.7L718.2 358.0L686.2 343.9ZM714.5 303.4L747.5 317.6L727.5 363.8L694.5 349.5ZM725.6 306.6L757.5 320.4L737.5 366.6L705.6 352.8ZM734.5 312.5L766.9 326.6L747.4 371.7L714.9 357.6ZM742.5 316.2L775.3 330.9L754.7 376.6L721.9 361.9ZM752.3 319.2L784.6 332.9L765.3 378.3L733.0 364.5ZM762.9 324.2L795.1 338.1L775.8 382.8L743.6 368.9ZM769.9 327.9L802.1 342.1L782.1 387.5L749.9 373.3ZM778.4 330.7L810.2 344.5L790.4 389.9L758.6 376.1ZM785.4 335.6L816.6 348.9L797.6 393.6L766.4 380.2ZM797.1 339.4L828.1 353.4L807.8 398.1L776.9 384.1ZM805.2 341.1L838.1 355.3L818.3 401.0L785.4 386.8ZM815.8 344.6L848.8 358.5L829.4 404.7L796.3 390.8ZM824.6 348.2L857.6 362.3L838.1 408.4L805.0 394.4ZM834.3 351.9L867.2 366.5L847.0 412.3L814.0 397.7ZM844.3 355.2L876.3 369.7L855.5 415.6L823.5 401.2ZM853.1 360.7L884.2 373.9L864.9 419.1L833.8 405.9ZM862.3 362.4L894.4 376.7L874.1 422.4L842.0 408.2ZM868.6 365.8L901.6 380.6L881.4 425.5L848.4 410.7Z"/>
<path d="M320.1 151.6L352.0 165.9L332.2 210.5L300.2 196.2ZM326.4 156.4L359.2 170.2L340.4 214.8L307.6 201.0ZM334.1 158.6L367.7 172.8L348.6 218.4L314.9 204.3ZM342.6 163.6L375.8 177.5L357.1 222.3L324.0 208.4ZM350.0 166.2L381.8 179.6L362.6 225.0L330.8 211.6ZM357.2 170.2L390.2 184.7L370.5 229.6L337.5 215.1ZM368.5 172.5L399.7 186.4L379.8 231.2L348.6 217.3ZM380.2 177.5L411.1 191.3L390.9 236.4L360.0 222.6ZM387.7 181.5L418.4 195.0L398.4 240.5L367.6 227.0ZM394.6 186.5L426.0 199.4L407.3 244.8L375.9 231.9ZM404.9 190.2L436.2 204.1L415.8 250.0L384.5 236.0ZM413.4 193.1L446.3 207.3L427.0 252.4L394.0 238.3ZM422.6 197.2L454.9 211.0L435.6 256.2L403.3 242.4ZM431.5 199.6L464.2 214.3L443.8 260.1L411.1 245.4ZM440.9 205.1L472.6 218.3L453.3 264.5L421.7 251.4ZM448.0 209.7L479.3 223.2L459.8 268.2L428.5 254.6ZM457.1 213.0L489.6 227.4L469.6 272.3L437.1 257.8ZM462.8 216.1L495.6 230.5L476.0 275.2L443.2 260.8ZM473.2 220.1L505.0 234.3L484.4 280.1L452.7 265.9ZM483.5 222.1L514.6 235.4L494.9 281.3L463.8 267.9ZM490.4 227.0L522.1 240.8L502.4 285.9L470.7 272.1ZM499.4 228.8L531.0 242.8L511.3 287.6L479.6 273.6ZM507.3 234.1L539.5 247.6L520.2 293.7L488.0 280.2ZM516.5 239.1L547.7 252.2L528.8 297.5L497.5 284.4ZM523.1 242.1L555.8 255.1L537.8 300.3L505.1 287.3ZM533.4 246.6L564.9 259.9L545.8 304.9L514.3 291.6ZM542.0 249.5L574.9 263.6L555.2 309.6L522.3 295.5ZM552.4 253.6L583.3 266.7L564.0 312.3L533.0 299.2ZM561.6 256.3L592.4 270.0L572.1 315.5L541.3 301.7ZM568.7 259.8L601.9 274.1L582.0 320.0L548.9 305.7ZM578.3 264.4L609.8 277.2L591.3 322.6L559.8 309.8ZM587.8 268.0L621.4 282.1L602.0 328.5L568.4 314.5ZM600.3 271.8L631.8 285.5L612.3 330.5L580.7 316.9ZM609.5 276.0L641.7 289.8L622.4 335.4L590.1 321.6ZM617.7 280.6L649.1 294.4L629.2 339.6L597.8 325.8ZM625.5 284.6L658.6 299.1L638.7 344.4L605.6 330.0ZM635.8 288.7L667.8 303.4L646.9 348.8L614.9 334.1ZM643.0 291.5L674.7 305.8L654.1 351.5L622.4 337.2ZM650.0 296.2L683.3 309.9L664.7 354.9L631.4 341.1ZM659.2 299.1L692.6 313.4L673.1 359.1L639.8 344.9ZM666.8 302.5L699.2 316.3L680.1 361.4L647.7 347.6ZM678.6 307.1L709.7 320.6L690.1 366.0L659.0 352.5ZM688.5 311.8L720.1 326.1L699.4 371.8L667.8 357.5ZM696.0 316.2L728.2 330.4L708.3 375.4L676.1 361.1ZM703.2 320.7L734.6 334.6L714.6 379.3L683.3 365.4ZM711.2 323.4L744.4 336.9L725.7 382.9L692.5 369.4ZM721.0 326.1L753.4 339.4L734.5 385.3L702.1 372.0ZM730.7 329.6L762.0 343.3L742.3 388.3L711.0 374.5ZM737.0 333.7L768.5 347.5L748.6 393.2L717.1 379.4ZM745.5 337.8L778.4 352.0L758.9 397.2L726.0 383.1ZM756.0 341.6L787.1 355.6L766.9 400.5L735.8 386.4ZM763.3 344.8L796.3 359.4L776.5 404.3L743.5 389.7ZM771.2 347.2L803.3 360.5L784.2 406.5L752.2 393.2ZM781.2 351.5L811.8 365.1L791.4 411.0L760.7 397.4ZM789.2 355.2L820.0 369.0L799.5 414.7L768.7 400.9ZM798.3 357.7L830.9 372.5L810.4 418.0L777.8 403.3ZM804.9 362.0L837.5 376.1L817.7 422.0L785.1 407.9ZM813.3 364.4L844.6 377.9L824.7 424.0L793.4 410.6ZM823.1 368.3L854.8 383.1L833.8 428.1L802.1 413.3ZM828.2 372.7L861.4 386.8L842.6 431.5L809.3 417.5ZM838.6 375.1L869.9 388.7L850.0 434.5L818.7 420.9ZM848.3 380.2L881.0 395.0L860.8 439.6L828.1 424.8Z"/>
<path d="M322.7 152.9L355.5 166.2L337.2 211.1L304.4 197.8ZM331.1 157.3L363.3 171.1L343.8 216.6L311.7 202.9ZM339.4 162.0L370.4 175.4L351.1 220.2L320.1 206.8ZM347.2 164.5L378.5 177.9L359.2 222.8L327.9 209.4ZM353.3 168.6L385.6 181.6L367.0 227.6L334.7 214.6ZM363.3 171.2L395.7 184.4L376.8 231.0L344.4 217.8ZM373.6 175.0L405.3 188.7L386.0 233.5L354.2 219.8ZM383.9 179.6L415.4 193.7L395.4 238.3L363.9 224.2ZM389.9 184.3L422.9 198.8L403.3 243.3L370.4 228.8ZM400.1 188.1L432.1 202.2L412.5 246.9L380.4 232.8ZM408.2 192.2L441.4 206.3L422.4 251.1L389.2 237.0ZM419.4 195.1L450.7 208.4L431.0 254.5L399.7 241.1ZM427.7 199.3L458.9 212.6L439.3 258.5L408.1 245.1ZM436.5 203.9L468.9 218.5L448.8 263.2L416.4 248.7ZM445.2 206.5L477.8 221.2L457.2 266.6L424.7 251.9ZM451.2 211.0L484.3 225.1L464.9 270.7L431.7 256.6ZM459.8 213.6L492.9 227.9L473.3 273.5L440.2 259.2ZM468.6 217.8L501.5 231.8L481.8 277.8L449.0 263.8ZM478.9 220.9L509.9 234.0L490.5 279.9L459.5 266.8ZM485.5 223.1L518.9 237.5L499.3 283.1L465.8 268.7ZM493.9 228.9L525.3 242.3L506.1 287.3L474.7 273.9ZM503.6 232.7L536.0 246.3L516.7 292.3L484.3 278.7ZM513.0 237.9L544.0 251.1L524.8 296.1L493.8 282.9ZM520.2 240.2L553.6 254.7L533.8 300.5L500.3 286.0ZM528.1 243.2L561.4 257.5L541.8 303.2L508.4 288.9ZM537.3 247.9L568.5 261.5L548.6 307.0L517.4 293.4ZM547.9 252.0L579.6 265.9L559.8 311.2L528.1 297.4ZM557.6 254.8L589.5 269.3L568.9 314.2L537.1 299.7ZM564.3 257.7L596.2 271.6L576.8 316.3L544.8 302.4ZM573.4 262.1L605.2 275.4L586.2 320.9L554.3 307.5ZM583.5 265.0L615.1 278.7L595.5 324.0L563.9 310.3ZM593.9 270.1L625.6 283.5L606.2 329.1L574.6 315.7ZM605.7 275.2L636.7 288.4L617.2 334.2L586.2 321.0ZM614.4 278.7L645.3 292.4L625.0 338.2L594.1 324.5ZM621.7 283.1L653.9 297.4L634.3 341.8L602.0 327.5ZM632.4 286.4L663.2 300.3L642.6 345.9L611.8 332.0ZM639.5 290.1L670.3 303.5L650.6 349.0L619.8 335.6ZM648.1 294.0L679.1 308.1L658.5 353.5L627.5 339.4ZM655.4 296.7L687.8 310.7L668.6 355.4L636.2 341.4ZM664.0 302.4L695.0 316.0L675.5 360.3L644.5 346.7ZM672.4 304.0L704.9 318.4L684.6 364.2L652.1 349.8ZM683.8 308.9L716.3 323.2L696.4 368.2L663.9 353.9ZM692.3 314.7L724.6 328.8L705.2 373.2L672.9 359.1ZM699.8 318.3L731.9 332.1L712.0 378.3L679.9 364.6ZM705.5 322.6L739.4 336.2L721.3 381.2L687.5 367.6ZM716.8 325.0L750.0 339.6L730.0 385.2L696.8 370.6ZM726.5 326.9L758.1 340.8L737.7 386.9L706.2 373.0ZM732.7 332.1L765.1 345.7L746.2 390.9L713.7 377.3ZM742.1 336.1L772.9 349.8L753.0 394.4L722.2 380.6ZM751.7 341.0L783.1 354.8L763.6 399.2L732.2 385.4ZM759.0 341.3L791.9 355.3L772.1 401.6L739.3 387.5ZM766.7 346.4L799.8 361.1L780.0 405.7L746.8 391.0ZM775.8 349.6L807.3 363.7L787.1 408.8L755.6 394.7ZM784.3 354.3L816.2 367.6L797.5 412.5L765.6 399.2ZM792.2 356.2L824.8 369.7L806.1 415.1L773.4 401.5ZM802.3 358.6L834.6 372.3L815.1 418.6L782.8 404.9ZM809.7 364.6L840.5 377.9L821.2 422.6L790.4 409.3ZM816.6 368.0L847.8 381.4L828.7 426.0L797.5 412.6ZM826.7 370.1L857.9 383.2L838.6 429.2L807.4 416.1ZM834.5 374.9L865.6 388.8L845.7 433.5L814.5 419.5ZM843.0 378.6L874.2 392.1L854.2 438.1L823.0 424.6ZM852.6 381.3L884.9 395.6L865.0 440.7L832.7 426.4Z"/>
<path d="M326.6 167.0L359.8 181.2L340.5 226.4L307.2 212.2ZM335.7 169.8L369.0 184.2L349.6 228.9L316.4 214.5ZM346.3 175.8L377.4 188.5L358.9 233.8L327.8 221.0ZM354.3 178.4L387.5 192.8L368.2 237.4L335.0 223.1ZM364.0 182.6L396.0 196.7L375.7 242.6L343.7 228.5ZM371.7 185.9L403.8 199.9L384.2 245.0L352.1 231.0ZM380.9 190.2L413.7 204.3L394.2 249.5L361.5 235.4ZM391.0 193.6L424.3 208.1L404.8 253.0L371.5 238.5ZM402.5 198.4L434.1 212.3L414.1 257.8L382.5 243.9ZM411.6 201.6L444.1 215.7L424.3 261.5L391.8 247.4ZM420.7 205.4L453.2 219.4L433.8 264.3L401.3 250.3ZM432.8 209.2L465.0 223.1L445.2 269.0L413.0 255.1ZM441.1 214.7L474.1 229.1L454.0 275.0L421.1 260.6ZM448.4 218.6L481.8 233.3L461.8 278.8L428.4 264.1ZM458.8 221.9L490.3 235.9L470.3 280.8L438.8 266.8ZM466.4 225.2L497.1 239.3L476.4 284.5L445.7 270.4ZM476.0 228.8L507.4 242.8L487.3 287.8L455.9 273.7ZM485.2 234.5L517.9 248.3L498.8 293.5L466.1 279.7ZM492.2 236.5L524.3 250.2L504.7 296.3L472.6 282.6ZM501.9 240.8L532.9 253.9L513.6 299.7L482.6 286.7ZM509.1 245.5L541.2 259.8L521.5 304.1L489.4 289.9ZM519.9 250.4L551.3 263.2L532.7 308.6L501.3 295.8ZM529.7 255.3L561.7 269.0L542.6 313.6L510.6 299.9ZM538.7 258.5L570.7 272.7L550.6 318.0L518.6 303.8ZM547.7 262.1L579.2 276.1L559.4 320.8L527.9 306.9ZM557.2 265.8L589.2 279.5L569.5 325.2L537.6 311.4ZM565.7 268.8L598.3 282.9L578.8 327.9L546.3 313.7ZM574.1 273.9L606.7 287.9L587.4 332.8L554.8 318.8ZM584.9 277.6L616.3 291.7L596.0 336.9L564.6 322.8ZM591.4 281.5L623.9 295.7L604.4 340.5L571.9 326.3ZM601.7 285.1L634.9 300.2L614.2 346.0L580.9 330.9ZM610.6 289.4L643.0 303.0L624.1 347.8L591.8 334.1ZM618.8 291.9L652.2 306.2L632.5 351.9L599.2 337.5ZM626.9 296.2L657.9 309.8L637.9 355.2L607.0 341.6ZM635.5 298.7L667.4 312.3L647.8 358.0L616.0 344.4ZM642.3 304.3L673.2 318.1L653.0 363.2L622.1 349.4ZM650.3 307.7L681.4 321.3L661.8 366.0L630.7 352.5ZM659.8 311.1L692.7 325.1L673.6 369.9L640.7 355.9ZM668.9 314.5L701.6 329.3L681.2 374.7L648.5 360.0ZM678.4 317.6L710.2 332.0L689.5 377.8L657.7 363.4ZM685.9 323.1L717.0 336.8L697.2 381.4L666.2 367.7ZM693.9 326.5L726.5 340.3L707.5 385.2L674.9 371.5ZM705.5 330.6L736.8 343.6L717.6 389.8L686.3 376.8ZM716.3 335.5L748.1 348.5L729.1 395.1L697.2 382.1ZM725.5 339.3L756.7 353.2L736.6 398.3L705.3 384.4ZM736.5 344.5L767.7 357.6L748.3 403.4L717.2 390.3ZM745.5 347.3L777.2 361.5L757.0 406.8L725.3 392.6ZM753.4 350.4L785.1 364.7L764.6 410.0L732.9 395.7ZM763.5 355.5L796.6 370.1L776.6 415.5L743.5 401.0ZM775.8 361.1L806.4 374.8L786.6 419.3L756.0 405.7ZM786.3 363.9L819.6 378.3L799.7 424.3L766.4 410.0ZM796.4 369.1L828.9 383.5L808.5 429.4L776.1 415.0ZM804.3 373.2L837.3 386.6L818.5 432.8L785.4 419.4ZM812.8 376.5L845.5 390.8L825.6 436.4L792.9 422.1ZM821.7 379.7L855.2 393.9L835.8 439.8L802.3 425.6ZM832.0 382.7L863.2 396.2L843.5 442.0L812.2 428.5ZM839.2 387.0L870.1 401.3L849.6 445.8L818.6 431.6ZM844.9 391.3L878.1 405.4L858.6 451.1L825.5 437.0Z"/>
<path d="M333.5 169.5L364.7 183.8L344.5 227.9L313.2 213.5ZM341.8 172.0L373.5 185.7L353.6 231.8L321.9 218.2ZM351.9 176.9L383.9 190.4L364.9 235.2L332.9 221.6ZM360.1 180.5L391.2 194.2L371.0 239.8L340.0 226.1ZM367.8 186.1L399.1 200.2L379.2 244.6L347.8 230.6ZM376.2 187.7L408.5 201.5L389.1 247.0L356.8 233.2ZM385.6 191.1L417.6 204.7L398.6 249.5L366.6 235.9ZM396.4 194.8L429.4 209.2L409.5 255.0L376.4 240.6ZM406.7 200.2L439.5 215.1L419.1 260.1L386.3 245.2ZM415.5 203.1L448.3 216.8L429.4 262.0L396.6 248.4ZM426.7 208.1L458.2 221.3L439.3 266.2L407.8 253.0ZM435.0 212.4L468.2 226.3L448.9 272.6L415.7 258.8ZM444.5 216.6L477.3 231.1L457.3 276.3L424.5 261.8ZM453.3 220.0L485.9 234.1L466.4 279.2L433.8 265.1ZM460.8 223.9L493.4 238.3L473.7 283.1L441.1 268.7ZM470.5 228.7L502.3 242.6L482.8 287.0L451.1 273.1ZM479.2 231.2L512.6 245.3L493.7 290.2L460.2 276.2ZM488.3 235.1L521.7 249.1L502.4 295.1L469.0 281.1ZM496.4 238.2L528.7 251.7L509.3 297.9L477.0 284.3ZM507.3 242.0L538.2 255.6L518.1 301.4L487.2 287.8ZM515.2 246.0L546.9 260.3L526.5 305.5L494.8 291.2ZM524.3 253.1L556.0 266.8L536.6 311.7L505.0 298.0ZM534.1 257.4L565.3 271.1L545.8 315.5L514.6 301.8ZM543.4 260.8L574.1 274.6L554.1 319.3L523.4 305.6ZM552.7 264.7L584.6 278.7L564.4 324.8L532.5 310.8ZM559.6 266.8L593.0 281.0L573.6 326.6L540.2 312.4ZM570.0 271.4L600.9 285.1L581.4 329.5L550.4 315.9ZM581.8 275.3L612.4 289.1L591.8 334.7L561.2 320.9ZM587.6 278.5L620.5 292.9L600.3 339.0L567.4 324.7ZM595.8 283.9L628.4 297.9L609.1 342.6L576.5 328.5ZM605.7 287.6L639.0 302.0L619.7 346.6L586.4 332.2ZM613.7 291.1L646.9 305.6L627.5 350.0L594.2 335.5ZM623.2 293.4L654.5 307.0L634.6 352.8L603.4 339.3ZM633.0 297.3L663.9 311.1L643.6 356.4L612.7 342.6ZM637.3 302.0L670.6 316.0L651.4 361.5L618.2 347.5ZM646.2 306.0L678.3 320.2L658.4 365.1L626.4 351.0ZM656.6 308.5L688.3 323.2L667.3 368.5L635.6 353.8ZM663.0 313.3L696.4 327.4L677.4 372.1L644.1 358.0ZM671.8 316.6L704.2 330.8L684.3 376.4L651.9 362.2ZM680.8 320.0L712.3 333.5L692.6 379.3L661.2 365.8ZM689.5 324.3L721.3 338.8L700.8 383.8L669.0 369.3ZM700.2 327.7L731.7 341.9L711.7 386.4L680.2 372.2ZM711.0 333.4L743.3 347.8L723.3 392.8L691.0 378.5ZM722.1 337.3L753.3 351.5L732.6 397.0L701.4 382.9ZM730.2 340.2L763.3 354.0L744.2 400.0L711.1 386.2ZM742.7 346.9L773.3 360.5L753.2 405.6L722.6 392.0ZM749.0 349.0L781.6 362.7L762.7 407.9L730.1 394.2ZM758.6 354.2L789.6 368.3L769.3 412.9L738.3 398.8ZM769.0 358.3L802.2 373.2L782.3 417.8L749.0 402.9ZM781.7 362.5L812.7 375.9L793.0 421.4L762.0 407.9ZM790.7 368.0L822.8 381.0L804.2 427.1L772.1 414.1ZM800.8 371.9L833.2 386.6L812.7 431.7L780.3 416.9ZM809.4 374.8L840.2 389.0L819.6 434.0L788.7 419.9ZM816.2 377.4L849.8 391.5L830.5 437.3L797.0 423.2ZM826.4 382.9L859.6 396.5L840.8 441.9L807.7 428.2ZM834.0 384.7L867.4 399.0L847.6 445.3L814.1 430.9ZM841.1 389.6L874.6 403.8L855.5 448.8L822.0 434.6ZM851.0 393.4L883.2 407.4L863.4 453.0L831.2 439.0Z"/>
<path d="M369.2 204.0L402.4 218.7L382.3 263.9L349.2 249.2ZM377.5 208.5L408.9 222.0L389.8 266.6L358.4 253.1ZM386.3 212.5L419.0 226.5L399.4 272.5L366.7 258.5ZM393.8 216.8L426.1 230.4L406.8 276.3L374.5 262.7ZM404.6 221.2L437.0 235.0L417.9 280.0L385.4 266.2ZM414.8 227.1L448.0 241.0L428.7 286.8L395.6 272.9ZM426.4 231.4L457.8 244.7L438.8 289.7L407.3 276.4ZM435.3 233.8L467.8 247.8L448.5 292.5L416.0 278.4ZM443.3 237.0L474.8 251.2L454.7 295.9L423.2 281.8ZM450.1 241.1L482.3 254.9L462.8 300.2L430.7 286.4ZM456.0 243.7L489.3 257.1L470.6 303.8L437.2 290.4ZM467.1 247.1L498.4 260.7L478.8 305.8L447.5 292.2ZM474.3 249.8L506.8 264.4L486.2 310.3L453.7 295.8ZM481.3 254.9L514.0 268.5L495.2 313.7L462.5 300.1ZM489.6 259.0L521.7 272.4L503.0 317.3L470.8 303.8ZM498.2 262.0L529.3 275.2L509.9 320.8L478.8 307.6ZM509.1 265.2L540.8 279.2L520.7 325.0L488.9 311.0ZM519.5 271.4L550.5 284.3L531.2 330.6L500.1 317.6ZM528.2 274.6L559.7 289.0L539.5 333.2L508.0 318.7ZM537.1 279.2L567.9 292.8L548.1 337.9L517.3 324.4ZM544.3 282.8L575.3 295.9L556.3 340.9L525.2 327.8ZM553.1 285.9L585.8 300.7L565.9 344.9L533.2 330.1ZM563.3 289.2L594.0 302.7L573.9 348.4L543.2 334.9ZM567.0 293.8L600.6 307.4L582.4 352.2L548.8 338.6ZM577.9 296.7L609.4 310.4L589.7 355.5L558.2 341.7ZM587.1 298.4L618.0 312.1L597.6 358.2L566.6 344.4ZM596.4 301.2L627.3 315.1L606.9 360.3L576.0 346.4ZM605.8 305.5L638.2 319.6L618.4 365.2L586.0 351.1ZM615.5 310.9L648.8 324.9L629.9 369.8L596.6 355.8ZM626.4 312.6L658.8 327.0L638.4 372.9L606.0 358.5ZM633.7 318.3L666.7 333.4L646.3 378.0L613.3 362.9ZM643.2 321.4L675.5 335.1L655.9 381.5L623.6 367.8ZM652.2 325.8L683.5 339.3L664.2 384.3L632.8 370.8ZM662.2 329.1L695.3 342.7L676.6 387.9L643.5 374.3ZM670.5 333.9L703.3 347.7L684.4 392.9L651.6 379.2ZM679.3 338.5L712.3 352.4L693.3 397.3L660.3 383.4ZM690.7 341.3L721.3 355.1L700.7 400.8L670.1 386.9ZM698.7 346.3L730.9 360.7L710.6 406.1L678.4 391.7ZM705.0 349.7L738.1 364.0L718.8 408.7L685.7 394.4ZM715.5 354.5L748.4 368.9L728.8 413.8L695.9 399.4ZM726.1 357.7L756.9 371.2L737.1 416.7L706.2 403.3ZM734.1 363.2L765.2 376.9L745.5 421.6L714.4 407.9ZM741.6 365.7L773.6 380.2L753.0 425.9L720.9 411.4ZM753.2 370.6L784.6 384.3L764.5 430.4L733.1 416.6ZM761.1 375.6L792.9 390.1L772.7 434.5L740.9 420.0ZM767.9 376.7L800.4 390.8L781.1 435.5L748.6 421.4ZM777.4 381.1L808.5 394.0L789.7 439.1L758.6 426.1ZM783.4 384.8L816.7 399.1L797.5 444.0L764.1 429.7ZM795.3 388.7L826.8 403.8L805.7 447.8L774.2 432.8ZM803.4 392.7L835.8 406.7L816.4 451.6L784.0 437.6ZM811.8 395.5L844.0 409.7L823.7 455.6L791.5 441.3ZM819.4 399.5L851.2 412.5L832.2 459.0L800.5 446.1ZM829.3 404.2L861.6 417.9L842.1 464.0L809.8 450.4Z"/>
<path d="M373.1 205.4L406.2 219.6L386.5 265.1L353.5 250.8ZM382.4 209.5L413.7 222.4L395.0 267.7L363.7 254.8ZM390.2 214.4L423.3 228.5L404.1 273.7L371.0 259.6ZM400.1 219.1L432.1 233.3L411.8 279.1L379.8 264.9ZM410.5 222.8L443.2 237.3L423.3 282.5L390.6 268.0ZM421.0 230.5L452.6 244.0L433.6 288.6L402.0 275.1ZM430.1 230.7L462.7 244.9L443.3 289.4L410.7 275.2ZM439.4 235.9L470.5 248.6L451.5 294.9L420.4 282.2ZM446.8 239.5L479.7 253.9L459.9 299.2L426.9 284.8ZM453.6 241.3L485.9 254.8L466.7 300.5L434.4 287.0ZM461.4 244.9L493.4 258.5L474.0 304.3L441.9 290.7ZM470.1 249.8L501.6 263.0L482.4 309.0L450.9 295.8ZM479.3 253.9L510.3 267.1L491.1 312.0L460.1 298.7ZM486.7 257.3L517.4 270.9L497.7 315.5L467.0 301.9ZM491.8 260.0L525.5 273.3L507.1 319.8L473.4 306.5ZM502.8 263.3L535.2 278.1L514.2 323.8L481.8 309.0ZM513.9 269.0L545.6 282.8L526.3 327.2L494.5 313.4ZM523.2 273.6L555.5 286.9L536.5 332.8L504.2 319.5ZM531.7 276.4L564.4 290.0L545.3 336.0L512.6 322.4ZM541.0 279.0L573.7 293.1L554.1 338.4L521.4 324.3ZM550.0 284.3L582.5 298.5L562.5 344.2L530.0 330.1ZM555.9 286.8L589.2 301.3L569.4 346.8L536.1 332.3ZM566.1 291.2L597.3 304.9L577.3 350.1L546.2 336.4ZM574.1 294.1L606.7 307.6L587.6 353.8L555.0 340.3ZM581.1 297.4L613.0 311.5L593.3 356.0L561.4 341.8ZM590.0 300.8L623.1 315.0L604.0 359.6L570.9 345.4ZM601.0 303.7L633.6 318.0L613.8 363.4L581.2 349.2ZM611.7 308.0L644.2 322.7L624.2 366.8L591.7 352.2ZM622.6 312.9L654.3 326.6L634.8 371.7L603.1 358.0ZM631.4 316.4L662.9 330.0L643.3 375.1L611.9 361.6ZM640.2 319.9L671.2 333.4L651.2 379.3L620.2 365.7ZM646.5 322.8L678.7 335.8L659.9 382.4L627.7 369.4ZM657.7 328.5L689.0 341.7L669.8 387.1L638.5 373.8ZM665.9 331.3L699.2 345.8L679.5 391.4L646.1 376.9ZM674.6 336.0L705.7 349.3L686.3 394.7L655.2 381.4ZM682.5 340.5L715.3 354.5L696.3 399.2L663.5 385.2ZM693.4 344.0L724.2 357.2L705.1 402.0L674.3 388.9ZM702.0 347.9L734.4 362.3L714.3 407.6L681.9 393.2ZM712.1 352.4L743.4 366.4L723.4 411.3L692.1 397.3ZM720.4 356.0L752.2 369.8L732.6 414.8L700.9 401.0ZM730.3 360.9L762.4 374.5L742.9 420.4L710.8 406.7ZM737.1 364.2L770.5 378.3L751.3 423.9L717.8 409.8ZM747.5 368.9L778.8 382.8L758.9 427.3L727.7 413.4ZM757.3 372.5L788.7 385.8L769.4 431.6L738.0 418.4ZM764.5 374.8L797.1 389.3L777.0 434.5L744.3 419.9ZM772.7 379.8L805.8 394.4L786.2 439.0L753.1 424.5ZM780.4 382.0L812.7 396.2L792.4 442.2L760.2 428.0ZM787.8 386.0L820.7 398.9L802.8 444.4L769.9 431.4ZM800.5 391.3L831.5 404.4L812.4 449.7L781.5 436.6ZM809.2 393.3L840.3 406.9L820.1 453.0L789.1 439.4ZM814.7 397.0L846.7 410.5L827.3 456.7L795.2 443.3ZM823.8 402.3L855.4 415.9L835.9 460.9L804.3 447.2ZM835.3 405.5L867.8 419.7L847.9 465.1L815.4 450.9Z"/>
<path d="M425.6 243.6L457.1 256.6L438.5 301.4L407.0 288.4ZM436.3 245.5L469.1 259.5L449.6 305.2L416.8 291.2ZM446.1 250.0L478.7 265.0L458.2 309.4L425.7 294.4ZM455.2 254.3L487.9 268.9L468.1 313.3L435.4 298.8ZM462.0 256.9L494.5 270.5L475.6 315.8L443.1 302.2ZM470.6 261.8L503.7 276.0L484.2 321.7L451.1 307.5ZM481.1 265.3L514.4 279.2L495.3 324.9L462.0 311.0ZM489.0 269.7L520.4 283.2L501.1 328.2L469.7 314.6ZM497.9 273.6L529.8 287.3L510.3 332.6L478.4 318.9ZM504.8 277.6L536.7 290.8L517.9 336.5L486.0 323.3ZM513.7 281.5L546.4 296.3L526.3 340.5L493.6 325.7ZM524.3 284.6L555.7 298.0L536.1 343.6L504.8 330.2ZM530.4 287.6L562.1 301.0L542.7 346.7L511.1 333.4ZM539.1 290.5L571.9 305.3L551.3 350.7L518.6 335.9ZM548.4 295.8L579.5 309.3L559.4 355.4L528.3 341.8ZM559.3 299.8L590.4 313.1L571.3 357.8L540.2 344.5ZM568.2 303.0L600.3 316.5L580.9 362.8L548.7 349.4ZM579.9 308.4L611.9 322.2L592.4 367.8L560.3 354.1ZM587.4 311.5L619.0 325.1L599.3 371.0L567.7 357.4ZM593.6 315.6L625.5 328.9L606.7 373.8L574.8 360.4ZM601.6 320.0L633.2 333.5L613.9 378.9L582.3 365.4ZM611.1 323.4L643.0 337.5L622.7 383.6L590.8 369.5ZM617.1 328.5L649.7 341.9L631.4 386.7L598.8 373.3ZM628.3 330.1L659.9 344.1L640.1 389.1L608.5 375.1ZM633.6 333.8L667.2 347.9L647.9 393.9L614.3 379.8ZM645.9 336.5L677.4 350.7L656.8 396.4L625.3 382.2ZM653.3 341.3L685.4 354.8L666.4 400.1L634.2 386.6ZM662.8 346.5L694.2 360.1L674.8 404.6L643.4 391.0ZM670.1 347.2L702.4 360.5L683.2 406.9L650.9 393.6ZM679.8 350.9L713.0 365.2L693.3 410.9L660.1 396.5ZM686.7 353.7L719.5 367.7L700.3 413.0L667.5 399.1ZM696.0 356.7L729.2 371.9L708.7 416.7L675.6 401.5ZM703.5 360.3L736.2 374.2L717.0 419.0L684.4 405.1ZM713.7 366.1L747.1 380.2L728.1 425.2L694.7 411.0ZM722.8 368.0L755.6 382.6L735.5 427.6L702.7 413.0ZM730.8 371.3L763.4 385.9L743.4 430.5L710.8 415.9ZM739.0 375.2L771.9 388.8L753.3 434.0L720.3 420.4ZM750.6 379.8L782.7 393.4L763.2 439.1L731.1 425.5ZM761.7 385.3L793.0 399.0L773.5 443.5L742.2 429.7ZM769.2 389.4L800.6 402.8L781.1 448.4L749.8 435.0ZM777.8 391.2L809.4 405.4L789.6 449.8L757.9 435.7ZM789.3 395.5L820.8 409.4L800.9 454.7L769.4 440.9ZM797.4 400.3L830.8 414.4L811.6 460.0L778.1 445.9ZM806.4 403.8L839.7 418.1L820.2 463.2L787.0 448.8ZM816.8 409.5L848.5 423.5L828.6 468.4L796.9 454.4ZM824.5 413.8L857.5 428.2L838.0 472.8L805.1 458.5ZM832.8 416.9L866.1 431.2L846.7 476.5L813.4 462.2Z"/>
<path d="M432.2 244.3L463.7 257.8L444.3 302.9L412.9 289.5ZM441.7 246.3L474.2 260.8L453.9 306.3L421.4 291.8ZM449.0 251.9L482.5 265.5L464.2 310.8L430.6 297.2ZM459.0 256.7L490.8 270.6L471.0 315.7L439.2 301.8ZM466.8 259.9L499.5 273.9L480.3 318.7L447.6 304.7ZM477.3 262.3L508.8 276.2L489.2 320.9L457.7 307.1ZM485.4 269.0L516.3 282.3L497.2 326.8L466.2 313.5ZM493.6 271.5L526.8 286.5L506.7 330.9L473.5 315.8ZM501.3 275.4L533.8 289.5L514.0 335.1L481.5 321.0ZM508.6 278.8L541.2 293.1L521.4 338.2L488.8 323.9ZM518.6 284.6L549.9 298.3L530.4 342.8L499.1 329.1ZM527.4 285.4L559.7 299.3L540.0 345.1L507.7 331.2ZM535.7 288.5L568.2 302.6L548.7 347.5L516.2 333.4ZM545.4 293.3L576.4 306.4L557.1 352.1L526.1 339.0ZM553.8 297.6L585.9 311.8L566.0 356.7L533.9 342.5ZM563.1 301.6L594.8 315.1L575.4 360.5L543.7 346.9ZM573.9 306.1L605.6 319.2L587.0 364.0L555.3 350.9ZM584.0 311.2L615.0 324.7L595.5 369.8L564.5 356.4ZM590.1 313.2L623.0 327.7L603.4 372.3L570.5 357.9ZM597.2 316.1L630.4 330.4L610.6 376.5L577.3 362.2ZM608.0 320.9L638.9 334.6L618.7 380.4L587.7 366.7ZM614.5 325.4L646.1 339.3L626.4 383.9L594.9 370.0ZM624.0 327.7L657.0 342.3L636.8 388.1L603.8 373.5ZM629.9 332.3L663.3 346.2L644.1 392.3L610.7 378.4ZM639.4 335.6L672.6 349.7L653.5 394.5L620.4 380.4ZM650.8 339.2L683.1 353.8L662.7 399.1L630.3 384.5ZM659.6 342.7L691.1 356.3L671.7 400.9L640.3 387.3ZM665.7 345.6L698.8 359.4L679.4 405.8L646.3 391.9ZM675.0 350.4L707.4 364.3L687.8 410.3L655.3 396.5ZM684.8 353.1L715.7 367.0L695.1 412.8L664.2 398.9ZM691.3 354.7L722.6 368.3L702.7 414.0L671.4 400.4ZM701.2 357.4L732.9 371.1L713.0 416.9L681.4 403.1ZM708.9 363.4L742.1 377.8L722.4 423.2L689.2 408.8ZM719.0 365.7L750.8 380.2L729.9 425.9L698.1 411.4ZM727.2 370.8L759.4 384.3L740.6 429.1L708.4 415.6ZM734.4 373.4L766.0 386.3L747.2 432.2L715.6 419.2ZM745.9 378.2L776.8 391.9L757.1 436.2L726.2 422.5ZM756.8 383.3L788.0 396.7L768.5 441.9L737.3 428.5ZM765.1 386.4L797.0 400.3L776.8 446.5L744.9 432.5ZM772.3 390.8L804.3 404.3L785.2 449.6L753.2 436.1ZM783.3 393.7L814.9 407.7L794.8 453.1L763.2 439.1ZM793.9 396.5L826.9 411.0L806.8 456.8L773.8 442.3ZM803.2 403.3L833.8 417.1L813.7 461.8L783.1 448.0ZM811.2 406.7L843.1 420.1L823.9 465.9L792.0 452.4ZM822.5 411.6L853.9 424.7L834.6 470.6L803.3 457.5ZM828.1 415.1L861.4 429.4L841.5 475.6L808.2 461.3Z"/>
<path d="M479.5 286.2L510.4 299.5L491.0 344.2L460.1 330.8ZM486.2 289.1L519.7 303.6L500.2 348.8L466.7 334.4ZM494.6 292.5L527.3 307.0L507.6 351.3L475.0 336.9ZM505.4 296.1L537.3 309.7L517.6 355.9L485.7 342.3ZM512.6 301.9L545.0 315.2L526.5 360.0L494.1 346.6ZM524.8 305.8L556.5 319.3L537.2 364.6L505.5 351.0ZM532.3 308.5L564.9 322.3L545.9 367.2L513.3 353.4ZM541.1 311.6L574.5 325.6L555.4 371.3L522.0 357.4ZM552.8 315.4L584.1 329.2L564.0 374.8L532.7 361.0ZM559.3 321.1L593.0 335.2L573.9 380.6L540.3 366.5ZM570.4 325.3L601.4 339.1L581.0 384.6L550.1 370.7ZM576.3 328.4L608.4 342.2L589.2 386.9L557.1 373.0ZM586.5 332.4L617.7 345.8L597.9 391.8L566.7 378.4ZM595.9 336.0L626.9 350.3L605.9 395.9L574.9 381.6ZM602.0 340.4L634.8 354.2L615.4 400.2L582.6 386.3ZM612.3 342.5L643.3 356.1L623.6 401.3L592.5 387.7ZM621.9 345.8L655.1 360.9L634.8 405.2L601.7 390.1ZM630.4 349.8L662.4 364.3L641.8 410.2L609.7 395.7ZM638.5 353.2L672.0 367.5L652.8 412.5L619.3 398.2ZM650.0 357.6L683.4 371.6L664.0 418.1L630.6 404.1ZM659.5 363.3L692.7 377.7L673.0 423.2L639.8 408.7ZM669.0 368.3L700.7 381.8L681.1 428.1L649.4 414.7ZM677.6 370.2L710.1 384.6L689.7 430.6L657.3 416.2ZM687.5 376.2L718.7 389.5L699.5 434.3L668.3 420.9ZM695.7 378.8L726.6 392.2L707.1 437.4L676.2 424.0ZM704.2 381.3L735.3 395.4L714.8 440.7L683.7 426.6ZM712.0 384.8L744.5 399.1L724.7 444.2L692.3 429.9ZM721.9 389.3L753.3 402.5L734.5 447.2L703.1 434.0ZM728.6 393.4L761.2 407.9L741.0 453.1L708.5 438.6ZM737.0 395.7L768.0 409.3L748.0 454.8L717.0 441.3ZM746.7 399.7L778.9 413.7L758.7 459.9L726.5 445.8ZM757.8 404.9L790.4 419.9L769.7 464.7L737.1 449.7ZM764.3 407.9L795.6 420.8L776.9 466.2L745.6 453.3ZM771.5 412.0L802.3 425.3L783.0 469.9L752.3 456.6ZM780.6 416.5L811.4 429.9L791.9 474.9L761.1 461.6ZM791.0 420.7L823.6 434.0L805.1 479.2L772.5 465.8ZM800.4 423.9L832.2 437.8L812.5 483.4L780.6 469.6ZM807.4 427.6L839.3 441.2L820.0 486.2L788.2 472.6ZM816.0 429.9L848.7 444.4L828.5 490.0L795.8 475.4Z"/>
<path d="M474.2 281.9L507.4 296.1L487.7 342.0L454.5 327.7ZM483.1 286.0L514.3 299.7L494.4 345.2L463.2 331.5ZM491.8 291.0L524.0 306.3L503.1 350.3L470.9 335.1ZM499.0 294.0L531.6 307.5L512.7 353.0L480.2 339.6ZM510.9 299.1L542.7 313.1L522.7 358.6L491.0 344.7ZM518.8 302.8L550.8 316.2L531.5 362.6L499.5 349.3ZM528.3 306.3L561.7 321.0L541.7 366.5L508.3 351.9ZM538.2 309.8L571.4 324.4L551.4 370.1L518.1 355.5ZM546.4 314.3L577.9 328.0L558.5 372.6L527.0 358.9ZM556.1 319.2L588.7 333.2L569.3 378.2L536.7 364.1ZM565.4 321.6L597.5 334.8L578.5 381.3L546.4 368.2ZM572.5 326.6L605.0 340.7L585.4 385.8L552.9 371.7ZM581.6 330.1L614.4 343.9L595.1 389.8L562.2 376.0ZM588.5 334.1L621.8 348.4L602.3 393.8L569.0 379.5ZM598.5 338.8L631.7 352.8L612.5 398.2L579.3 384.2ZM608.0 340.8L638.8 355.1L618.0 400.2L587.1 386.0ZM615.1 345.2L647.7 358.7L629.1 403.7L596.5 390.3ZM626.7 349.7L657.6 362.7L638.6 407.7L607.6 394.6ZM634.0 352.6L667.3 366.7L647.9 412.5L614.7 398.4ZM644.8 356.6L677.0 370.3L657.9 415.1L625.7 401.4ZM655.2 360.6L688.5 375.5L668.5 420.3L635.2 405.4ZM666.5 365.6L697.4 379.3L677.0 425.3L646.1 411.6ZM674.4 369.7L705.2 383.6L684.7 429.1L653.9 415.2ZM682.8 373.6L715.6 387.6L696.1 433.1L663.3 419.0ZM691.4 375.6L723.6 389.9L703.6 435.2L671.4 420.9ZM699.6 380.1L730.6 393.7L710.8 438.9L679.8 425.3ZM709.3 384.4L740.4 398.3L720.5 442.6L689.5 428.7ZM716.6 386.0L748.2 399.7L728.7 444.7L697.1 431.0ZM726.2 390.4L757.0 404.0L736.9 449.2L706.2 435.6ZM731.8 394.2L765.1 408.5L745.9 453.0L712.7 438.7ZM742.1 398.6L774.0 412.3L754.4 458.0L722.5 444.3ZM751.5 403.3L784.1 417.2L764.8 462.7L732.1 448.8ZM760.8 406.4L793.2 420.2L773.5 466.5L741.1 452.7ZM767.8 408.1L799.7 421.6L780.3 467.5L748.5 454.0ZM776.3 413.2L808.8 427.8L789.0 472.2L756.4 457.6ZM785.5 418.5L818.4 433.3L797.9 478.5L765.1 463.6ZM795.8 422.9L828.2 436.6L809.2 481.6L776.7 467.8ZM803.4 425.5L836.2 439.9L816.5 485.2L783.6 470.8ZM812.2 428.0L843.7 441.1L824.9 486.6L793.3 473.6ZM818.8 432.8L851.4 446.6L832.0 492.4L799.4 478.6Z"/>
<path d="M526.6 316.4L557.4 329.8L537.2 375.9L506.4 362.5ZM535.8 320.1L567.7 333.5L548.8 378.6L516.9 365.2ZM545.0 323.5L576.1 336.9L556.7 381.9L525.5 368.4ZM555.4 327.0L588.6 341.5L568.9 386.7L535.7 372.2ZM563.6 331.1L596.3 344.9L577.0 390.6L544.3 376.8ZM573.3 336.0L605.4 350.4L585.3 395.1L553.1 380.7ZM579.9 338.3L613.0 352.9L593.5 397.4L560.3 382.8ZM590.5 344.4L623.5 358.4L604.2 403.8L571.2 389.8ZM602.4 349.7L633.2 363.5L613.3 408.2L582.4 394.4ZM610.4 353.1L642.2 367.1L622.3 412.3L590.5 398.3ZM617.5 356.3L650.7 370.4L631.4 415.6L598.2 401.4ZM625.7 359.2L657.5 372.6L638.5 417.8L606.7 404.5ZM636.1 363.7L668.1 377.2L649.1 422.2L617.1 408.7ZM647.2 368.2L679.5 381.7L660.5 427.2L628.2 413.8ZM656.4 372.4L687.8 386.4L667.6 431.6L636.2 417.6ZM664.1 376.0L695.6 389.2L676.6 434.7L645.1 421.5ZM675.5 380.4L706.2 394.0L685.8 440.0L655.1 426.3ZM682.8 383.9L716.0 398.0L696.5 443.8L663.4 429.7ZM691.7 388.5L722.7 402.1L703.0 446.7L672.0 433.0ZM701.3 390.2L733.9 405.2L713.0 450.5L680.4 435.5ZM709.7 395.0L741.6 409.0L722.0 453.7L690.1 439.7ZM719.7 399.5L751.1 414.1L730.3 458.9L699.0 444.3ZM727.2 403.0L759.3 416.3L740.3 462.0L708.2 448.7ZM735.0 406.9L766.6 420.4L747.0 466.0L715.5 452.5ZM742.4 410.6L775.0 424.3L755.8 470.1L723.2 456.4ZM750.7 413.5L782.3 426.3L764.0 471.4L732.4 458.6ZM758.4 417.2L790.5 431.0L771.0 476.4L738.9 462.7ZM768.8 420.4L800.2 433.8L780.6 479.8L749.2 466.4ZM775.8 423.7L807.1 436.8L788.0 482.5L756.7 469.4ZM784.4 429.2L815.7 443.0L796.0 487.8L764.6 474.0ZM792.7 431.3L825.4 445.8L804.9 491.9L772.2 477.3ZM798.8 436.3L830.8 450.0L811.4 495.3L779.4 481.6ZM809.0 440.3L841.4 454.2L822.2 499.1L789.8 485.3ZM818.2 445.1L850.4 458.5L831.7 503.4L799.5 490.0Z"/>
<path d="M531.2 317.0L562.8 330.8L543.4 375.4L511.8 361.6ZM541.4 320.7L573.1 334.9L553.0 379.9L521.2 365.6ZM550.8 325.6L582.5 339.8L562.6 384.3L530.8 370.1ZM560.4 329.4L592.1 343.5L572.4 387.7L540.7 373.6ZM567.6 333.5L599.0 346.8L579.4 393.0L548.0 379.6ZM576.1 338.2L607.3 351.3L588.4 396.3L557.2 383.2ZM585.7 342.8L617.5 356.5L598.2 401.0L566.4 387.2ZM596.7 347.0L629.5 361.3L609.5 407.2L576.7 392.9ZM607.3 352.1L638.5 365.9L618.9 410.2L587.7 396.3ZM614.6 353.7L646.6 367.9L626.7 413.1L594.7 398.9ZM621.9 357.0L655.3 371.4L635.8 416.5L602.4 402.1ZM631.4 362.2L663.1 376.3L643.3 420.8L611.6 406.7ZM642.0 366.1L673.0 379.0L654.1 424.1L623.1 411.1ZM650.3 371.2L682.8 385.1L663.6 429.9L631.0 415.9ZM659.4 373.0L691.9 387.3L672.0 432.6L639.5 418.3ZM669.3 376.6L702.8 390.8L683.2 436.9L649.7 422.7ZM680.3 382.1L713.3 396.5L693.5 441.8L660.5 427.4ZM689.0 386.3L719.7 399.9L699.9 444.7L669.1 431.2ZM694.7 389.6L727.9 404.7L707.5 449.6L674.3 434.5ZM702.8 394.2L736.1 408.1L717.4 453.1L684.1 439.2ZM714.6 398.7L747.2 412.9L727.5 458.0L694.9 443.7ZM723.1 402.5L754.8 416.3L735.4 461.1L703.7 447.4ZM730.8 404.8L762.3 417.8L743.4 463.9L711.9 450.9ZM740.1 408.8L770.8 422.1L750.8 468.0L720.1 454.6ZM746.7 411.2L779.2 425.7L758.7 471.4L726.3 456.8ZM755.3 415.4L787.1 429.3L767.5 473.9L735.8 460.0ZM763.9 419.0L794.9 433.3L774.6 477.3L743.6 463.0ZM772.0 422.6L804.0 435.9L785.0 481.5L753.0 468.1ZM780.3 427.9L811.7 441.6L792.3 486.1L760.9 472.4ZM788.6 431.0L820.0 444.6L800.8 489.0L769.4 475.5ZM795.5 434.3L827.6 447.4L809.0 492.8L776.9 479.7ZM804.1 437.5L837.2 452.0L817.4 497.1L784.3 482.5ZM812.6 442.7L846.2 456.7L827.7 501.4L794.0 487.5Z"/>
<path d="M573.6 358.8L605.9 372.9L586.3 417.9L554.0 403.8ZM579.7 361.7L613.0 375.9L594.0 420.5L560.6 406.2ZM591.3 365.5L622.7 380.0L602.0 424.7L570.5 410.1ZM598.1 368.6L630.1 382.5L610.1 428.5L578.1 414.6ZM607.0 372.9L639.4 386.7L620.1 432.0L587.7 418.2ZM615.9 376.8L648.5 391.2L629.1 435.5L596.4 421.2ZM624.5 380.0L655.4 393.8L635.0 439.5L604.1 425.7ZM633.5 383.8L666.5 398.4L646.8 442.8L613.8 428.3ZM642.0 387.2L673.4 401.2L653.4 445.9L622.0 431.8ZM650.5 391.5L682.5 405.0L663.1 451.2L631.0 437.8ZM659.6 396.2L691.6 411.4L670.2 456.6L638.2 441.4ZM667.1 401.3L699.7 415.2L680.6 459.9L648.0 446.0ZM676.8 403.4L709.4 418.0L689.1 463.3L656.5 448.8ZM687.4 408.0L718.8 421.8L698.8 467.5L667.4 453.7ZM695.8 411.9L728.7 426.7L708.2 472.4L675.3 457.6ZM703.4 416.4L736.5 430.5L717.4 475.6L684.2 461.6ZM713.3 420.1L744.2 433.2L724.5 479.5L693.7 466.5ZM721.5 422.5L752.9 437.1L731.6 482.8L700.2 468.2ZM729.9 428.5L762.2 442.3L743.1 487.3L710.7 473.5ZM740.3 432.1L772.1 445.4L752.8 491.7L720.9 478.5ZM750.4 435.4L782.6 448.9L763.3 495.0L731.1 481.5ZM758.5 438.7L790.1 452.7L769.7 498.7L738.1 484.7ZM767.6 441.9L799.7 455.8L780.1 500.9L748.1 487.0ZM778.8 444.8L810.8 459.0L790.9 503.9L758.9 489.7ZM786.1 449.7L819.7 463.7L800.4 509.9L766.8 495.9ZM796.8 454.2L828.5 468.3L808.8 512.7L777.1 498.6Z"/>
<path d="M571.0 356.2L603.5 370.4L583.5 416.0L551.0 401.8ZM577.3 359.7L609.5 373.7L589.6 419.6L557.3 405.6ZM585.4 364.2L617.4 377.7L598.5 422.5L566.5 409.0ZM593.7 367.6L625.7 381.0L606.4 427.1L574.4 413.7ZM601.6 370.1L633.8 384.0L614.2 429.2L582.1 415.3ZM610.1 373.8L642.9 387.8L623.9 432.4L591.1 418.4ZM620.5 379.3L651.8 393.1L632.3 437.5L601.0 423.8ZM627.2 382.3L660.0 396.6L640.6 441.2L607.9 426.9ZM637.0 385.2L669.2 399.0L649.9 443.8L617.7 430.0ZM646.1 390.6L677.3 403.8L658.0 449.3L626.8 436.1ZM655.2 394.0L686.3 408.4L665.3 453.8L634.2 439.4ZM662.9 399.6L695.2 413.8L675.7 458.5L643.3 444.3ZM672.0 401.6L705.3 416.3L685.4 461.3L652.1 446.7ZM680.8 404.7L714.1 419.5L693.8 465.1L660.5 450.4ZM691.3 411.3L724.1 425.7L704.2 470.9L671.4 456.5ZM700.3 416.0L732.0 429.5L713.0 474.2L681.3 460.7ZM709.6 419.1L741.5 432.9L722.1 478.1L690.1 464.3ZM716.8 421.4L748.9 435.8L728.7 480.9L696.6 466.5ZM725.5 426.4L758.2 441.2L737.7 486.6L705.0 471.8ZM733.5 430.7L766.2 444.2L747.3 490.0L714.6 476.5ZM744.0 434.1L776.6 448.0L757.2 493.7L724.5 479.9ZM754.2 437.5L786.8 451.8L766.8 497.8L734.2 483.5ZM763.2 440.9L796.7 455.2L777.6 500.1L744.1 485.7ZM773.8 444.5L805.2 458.2L785.6 503.1L754.3 489.5ZM783.3 448.4L814.3 461.8L795.1 506.4L764.1 493.0ZM791.4 452.2L823.9 466.1L804.9 510.7L772.4 496.9ZM801.7 455.4L834.7 470.0L814.2 516.1L781.2 501.4Z"/>
<path d="M624.6 393.6L657.1 407.9L637.4 452.7L604.9 438.4ZM635.8 397.5L668.1 411.2L648.5 457.5L616.2 443.8ZM645.3 403.2L677.4 416.9L657.8 462.6L625.7 448.8ZM655.0 407.1L687.9 421.5L668.4 466.3L635.5 451.9ZM665.3 411.1L697.0 423.8L678.6 469.7L646.8 456.9ZM672.7 413.5L705.8 428.3L686.0 472.8L652.8 458.0ZM682.5 416.9L714.6 431.4L694.6 475.7L662.5 461.3ZM693.0 420.2L726.1 434.5L706.3 480.4L673.1 466.1ZM701.9 424.2L734.6 438.2L715.0 483.9L682.3 470.0ZM713.4 429.6L745.7 444.2L725.7 488.5L693.4 473.9ZM724.3 434.2L756.0 448.1L735.9 494.0L704.2 480.2ZM731.5 439.9L763.6 453.4L744.7 498.1L712.6 484.5ZM740.4 441.0L771.9 454.8L751.8 500.5L720.4 486.7ZM749.1 445.1L781.4 458.9L761.8 505.0L729.4 491.2ZM758.9 448.3L792.0 462.6L772.0 508.6L739.0 494.3ZM768.5 452.0L800.4 466.2L779.9 512.1L748.1 497.9ZM780.8 456.7L811.3 470.5L790.7 516.1L760.1 502.3ZM788.0 462.3L819.3 475.2L800.0 521.7L768.8 508.8ZM795.9 464.9L828.1 478.9L808.3 524.4L776.2 510.4ZM805.0 469.6L836.5 483.1L817.2 528.2L785.7 514.7Z"/>
<path d="M631.2 394.8L662.9 408.6L643.5 453.6L611.7 439.8ZM640.6 400.2L672.6 414.1L652.8 459.5L620.8 445.6ZM650.3 403.2L683.4 417.9L663.7 462.2L630.7 447.6ZM659.4 409.1L691.2 422.3L672.2 468.1L640.4 454.8ZM669.8 412.0L702.6 426.4L682.4 472.4L649.6 458.0ZM678.8 416.3L710.4 430.1L690.9 474.7L659.3 460.9ZM688.5 418.7L719.7 432.5L699.4 478.5L668.2 464.7ZM695.8 421.4L729.5 435.5L710.6 480.7L677.0 466.7ZM708.6 426.1L739.8 439.5L719.9 485.5L688.8 472.1ZM718.5 431.2L751.3 445.7L731.5 490.8L698.7 476.4ZM727.8 437.3L758.6 451.1L738.6 495.7L707.8 482.0ZM735.6 441.4L767.8 455.2L748.3 501.0L716.0 487.2ZM743.6 443.3L775.5 457.5L755.6 502.4L723.6 488.2ZM752.9 447.2L784.4 460.2L765.6 505.7L734.2 492.8ZM762.4 452.1L795.0 466.1L775.6 511.1L743.0 497.1ZM773.1 454.9L806.3 469.5L786.4 515.0L753.1 500.4ZM784.5 460.5L816.4 474.5L796.7 519.6L764.8 505.6ZM790.4 463.6L824.0 477.3L805.2 523.3L771.6 509.5ZM800.5 467.1L831.8 480.4L812.2 526.6L780.9 513.4Z"/>
<path d="M676.2 434.0L707.9 447.0L689.0 493.2L657.3 480.3ZM684.5 438.6L716.2 452.0L697.3 496.7L665.6 483.3ZM695.0 441.9L726.3 455.9L706.4 500.4L675.1 486.4ZM704.0 444.6L735.2 458.4L714.7 504.4L683.6 490.6ZM711.3 447.4L744.1 461.9L724.0 507.5L691.2 493.0ZM718.6 453.7L750.7 466.6L732.0 513.4L699.8 500.5ZM725.2 456.3L758.2 470.2L739.1 515.7L706.1 501.9ZM734.0 459.4L766.8 473.4L747.4 519.2L714.6 505.2ZM742.0 462.0L774.1 476.5L754.1 520.9L721.9 506.5ZM749.8 467.8L781.6 480.9L762.4 527.0L730.7 513.9ZM759.1 470.6L792.1 485.4L772.3 529.6L739.3 514.9ZM769.6 474.7L800.9 488.4L781.0 533.8L749.7 520.0ZM779.3 477.9L811.0 491.5L791.8 536.2L760.1 522.7ZM789.0 481.0L820.8 494.6L801.3 540.0L769.6 526.4Z"/>
<path d="M672.5 433.1L703.5 446.3L684.4 491.1L653.4 477.9ZM681.0 434.9L713.5 449.1L693.5 494.7L661.0 480.5ZM690.9 439.0L721.6 452.7L701.2 498.2L670.5 484.5ZM697.6 442.7L730.6 457.0L711.0 502.5L678.0 488.3ZM708.9 446.7L740.2 460.5L719.9 506.3L688.7 492.5ZM714.7 451.2L746.5 464.8L726.9 510.7L695.1 497.1ZM721.6 454.8L754.6 468.7L735.5 513.9L702.5 500.0ZM729.6 457.4L761.1 471.0L741.3 516.6L709.8 503.0ZM738.4 461.2L770.0 474.9L750.5 519.9L718.9 506.2ZM746.7 465.8L778.1 479.5L758.3 524.8L726.9 511.1ZM756.8 469.1L787.3 483.2L766.6 527.7L736.2 513.6ZM765.4 473.3L796.6 487.1L777.0 531.6L745.8 517.8ZM773.8 476.4L805.4 490.2L785.3 536.3L753.7 522.4ZM786.1 480.2L816.7 494.2L796.0 539.5L765.4 525.5ZM792.9 485.0L824.5 497.8L805.9 544.0L774.3 531.3Z"/>
<path d="M725.5 467.5L756.6 481.2L736.6 526.4L705.5 512.7ZM734.7 469.7L766.3 483.6L746.4 528.6L714.9 514.7ZM742.5 474.2L775.5 488.0L756.3 533.8L723.4 520.0ZM750.4 476.7L783.7 491.1L764.2 536.2L730.9 521.9ZM759.5 480.8L791.5 494.3L772.0 540.7L740.0 527.2ZM771.3 484.8L804.2 499.3L784.4 544.1L751.5 529.6ZM778.0 489.2L810.3 504.0L789.7 549.0L757.4 534.3ZM783.9 492.4L816.7 506.5L797.6 551.0L764.8 537.0Z"/>
<path d="M728.4 469.3L759.7 482.3L740.9 527.4L709.6 514.3ZM739.9 473.1L772.0 487.3L751.7 533.3L719.5 519.0ZM747.1 475.5L778.6 489.3L758.6 534.9L727.1 521.0ZM757.3 479.0L788.1 492.3L768.6 537.7L737.7 524.4ZM765.0 483.8L797.4 497.7L778.3 542.2L745.9 528.3ZM774.0 486.4L807.4 501.2L787.2 546.8L753.8 532.1ZM782.6 489.9L813.3 503.7L792.7 549.7L761.9 535.9Z"/>
<path d="M280.2 153.6L317.9 156.8L320.6 205.8L281.8 211.2ZM308.3 144.4L341.0 163.0L314.2 208.6L281.5 190.0ZM337.9 226.3L361.5 236.0L349.0 259.5L326.0 250.7ZM352.0 231.5L380.0 243.5L368.0 268.0L341.0 256.5ZM907.3 346.0L935.1 370.4L891.9 403.2L864.5 378.3ZM896.4 371.3L918.1 391.7L889.0 426.0L866.0 406.0ZM874.7 374.5L918.1 391.7L893.5 433.5L852.0 415.0ZM884.3 406.4L908.6 434.5L873.5 459.5L850.0 432.0ZM899.6 412.1L876.6 460.0L838.0 442.0L861.0 394.5ZM882.4 439.0L867.3 463.2L835.0 448.0L850.5 423.0ZM867.3 463.2L862.2 489.4L824.0 478.0L830.0 452.0ZM866.4 480.0L847.5 513.6L810.0 497.0L829.0 463.0ZM847.5 513.6L822.6 535.3L800.0 512.0L824.0 490.0ZM918.1 391.7L827.9 520"/>
</g>
<g>
<path fill="none" stroke="#0c0cf0" stroke-width="1.3" d="M351.8 139.8L883.4 367.9"/>
<circle cx="351.8" cy="139.8" r="1.7" fill="#0808ff"/><circle cx="883.4" cy="367.9" r="1.7" fill="#0808ff"/>
<path fill="none" stroke="#0c0cf0" stroke-width="1.3" d="M344.3 152.5L623.9 273.6"/>
<circle cx="344.3" cy="152.5" r="1.7" fill="#0808ff"/><circle cx="623.9" cy="273.6" r="1.7" fill="#0808ff"/>
<path fill="none" stroke="#0c0cf0" stroke-width="1.3" d="M642.1 281.3L872.7 380.5"/>
<circle cx="642.1" cy="281.3" r="1.7" fill="#0808ff"/><circle cx="872.7" cy="380.5" r="1.7" fill="#0808ff"/>
<path fill="none" stroke="#0c0cf0" stroke-width="1.3" d="M332.2 163.8L873.0 397.7"/>
<circle cx="332.2" cy="163.8" r="1.7" fill="#0808ff"/><circle cx="873.0" cy="397.7" r="1.7" fill="#0808ff"/>
<path fill="none" stroke="#0c0cf0" stroke-width="1.3" d="M324.6 177.0L860.6 408.3"/>
<circle cx="324.6" cy="177.0" r="1.7" fill="#0808ff"/><circle cx="860.6" cy="408.3" r="1.7" fill="#0808ff"/>
<path fill="none" stroke="#0c0cf0" stroke-width="1.3" d="M330.9 195.2L857.5 423.3"/>
<circle cx="330.9" cy="195.2" r="1.7" fill="#0808ff"/><circle cx="857.5" cy="423.3" r="1.7" fill="#0808ff"/>
<path fill="none" stroke="#0c0cf0" stroke-width="1.3" d="M379.5 232.9L505.3 286.9"/>
<circle cx="379.5" cy="232.9" r="1.7" fill="#0808ff"/><circle cx="505.3" cy="286.9" r="1.7" fill="#0808ff"/>
<path fill="none" stroke="#0c0cf0" stroke-width="1.3" d="M513.7 290.5L844.3 433.5"/>
<circle cx="513.7" cy="290.5" r="1.7" fill="#0808ff"/><circle cx="844.3" cy="433.5" r="1.7" fill="#0808ff"/>
<path fill="none" stroke="#0c0cf0" stroke-width="1.3" d="M435.1 273.0L840.0 447.7"/>
<circle cx="435.1" cy="273.0" r="1.7" fill="#0808ff"/><circle cx="840.0" cy="447.7" r="1.7" fill="#0808ff"/>
<path fill="none" stroke="#0c0cf0" stroke-width="1.3" d="M485.0 310.2L828.0 458.9"/>
<circle cx="485.0" cy="310.2" r="1.7" fill="#0808ff"/><circle cx="828.0" cy="458.9" r="1.7" fill="#0808ff"/>
<path fill="none" stroke="#0c0cf0" stroke-width="1.3" d="M534.4 347.9L823.3 473.0"/>
<circle cx="534.4" cy="347.9" r="1.7" fill="#0808ff"/><circle cx="823.3" cy="473.0" r="1.7" fill="#0808ff"/>
<path fill="none" stroke="#0c0cf0" stroke-width="1.3" d="M581.3 384.3L807.2 482.0"/>
<circle cx="581.3" cy="384.3" r="1.7" fill="#0808ff"/><circle cx="807.2" cy="482.0" r="1.7" fill="#0808ff"/>
<path fill="none" stroke="#0c0cf0" stroke-width="1.3" d="M634.1 423.5L805.9 497.7"/>
<circle cx="634.1" cy="423.5" r="1.7" fill="#0808ff"/><circle cx="805.9" cy="497.7" r="1.7" fill="#0808ff"/>
<path fill="none" stroke="#0c0cf0" stroke-width="1.3" d="M682.6 460.1L795.3 509.0"/>
<circle cx="682.6" cy="460.1" r="1.7" fill="#0808ff"/><circle cx="795.3" cy="509.0" r="1.7" fill="#0808ff"/>
<path fill="none" stroke="#0c0cf0" stroke-width="1.3" d="M733.7 498.4L787.9 522.0"/>
<circle cx="733.7" cy="498.4" r="1.7" fill="#0808ff"/><circle cx="787.9" cy="522.0" r="1.7" fill="#0808ff"/>
</g>
<path fill="none" stroke="#62d862" stroke-width="1.25" stroke-linejoin="round" d="M415.0 177.8L423.3 191.8L406.7 191.8Z"/>
<path fill="none" stroke="#62d862" stroke-width="1.1" d="M413.0 187.2h4M415.0 185.2v4"/>
<text x="425.0" y="190.6" fill="#e40000" stroke="#e40000" stroke-width="0.3" font-size="10" textLength="21.4" lengthAdjust="spacingAndGlyphs" font-family="'Liberation Sans', sans-serif">P415</text>
<path fill="none" stroke="#62d862" stroke-width="1.25" stroke-linejoin="round" d="M521.5 209.3L529.8 223.3L513.2 223.3Z"/>
<path fill="none" stroke="#62d862" stroke-width="1.1" d="M519.5 218.7h4M521.5 216.7v4"/>
<text x="531.5" y="222.1" fill="#e40000" stroke="#e40000" stroke-width="0.3" font-size="10" textLength="21.4" lengthAdjust="spacingAndGlyphs" font-family="'Liberation Sans', sans-serif">P403</text>
<path fill="none" stroke="#62d862" stroke-width="1.25" stroke-linejoin="round" d="M442.0 233.3L450.3 247.3L433.7 247.3Z"/>
<path fill="none" stroke="#62d862" stroke-width="1.1" d="M440.0 242.7h4M442.0 240.7v4"/>
<text x="452.0" y="246.1" fill="#e40000" stroke="#e40000" stroke-width="0.3" font-size="10" textLength="21.4" lengthAdjust="spacingAndGlyphs" font-family="'Liberation Sans', sans-serif">P331</text>
<path fill="none" stroke="#62d862" stroke-width="1.25" stroke-linejoin="round" d="M507.0 303.3L515.3 317.3L498.7 317.3Z"/>
<path fill="none" stroke="#62d862" stroke-width="1.1" d="M505.0 312.7h4M507.0 310.7v4"/>
<text x="517.0" y="316.1" fill="#e40000" stroke="#e40000" stroke-width="0.3" font-size="10" textLength="21.4" lengthAdjust="spacingAndGlyphs" font-family="'Liberation Sans', sans-serif">P308</text>
<path fill="none" stroke="#62d862" stroke-width="1.25" stroke-linejoin="round" d="M674.0 272.8L682.3 286.8L665.7 286.8Z"/>
<path fill="none" stroke="#62d862" stroke-width="1.1" d="M672.0 282.2h4M674.0 280.2v4"/>
<text x="684.0" y="285.6" fill="#e40000" stroke="#e40000" stroke-width="0.3" font-size="10" textLength="21.4" lengthAdjust="spacingAndGlyphs" font-family="'Liberation Sans', sans-serif">P402</text>
<path fill="none" stroke="#62d862" stroke-width="1.25" stroke-linejoin="round" d="M763.6 307.6L771.9 321.6L755.3 321.6Z"/>
<path fill="none" stroke="#62d862" stroke-width="1.1" d="M761.6 317.0h4M763.6 315.0v4"/>
<text x="773.6" y="320.4" fill="#e40000" stroke="#e40000" stroke-width="0.3" font-size="10" textLength="21.4" lengthAdjust="spacingAndGlyphs" font-family="'Liberation Sans', sans-serif">P399</text>
<path fill="none" stroke="#62d862" stroke-width="1.25" stroke-linejoin="round" d="M716.0 372.8L724.3 386.8L707.7 386.8Z"/>
<path fill="none" stroke="#62d862" stroke-width="1.1" d="M714.0 382.2h4M716.0 380.2v4"/>
<text x="726.0" y="385.6" fill="#e40000" stroke="#e40000" stroke-width="0.3" font-size="10" textLength="21.4" lengthAdjust="spacingAndGlyphs" font-family="'Liberation Sans', sans-serif">P327</text>
<path fill="none" stroke="#62d862" stroke-width="1.25" stroke-linejoin="round" d="M867.7 359.2L876.0 373.2L859.4 373.2Z"/>
<path fill="none" stroke="#62d862" stroke-width="1.1" d="M865.7 368.6h4M867.7 366.6v4"/>
<text x="877.7" y="372.0" fill="#e40000" stroke="#e40000" stroke-width="0.3" font-size="10" textLength="21.4" lengthAdjust="spacingAndGlyphs" font-family="'Liberation Sans', sans-serif">P398</text>
</svg>
<div class="vsb"></div><div class="vth"></div>
<div class="hsb"></div><div class="hbl"></div><div class="htr"></div><div class="hth"></div>
<svg class="abs" style="left:0;top:0;z-index:4" width="1267" height="627" viewBox="0 0 1267 627"><path d="M3.8 615.2l3.2-2.5v5zM1254.2 615.2l-3.2-2.5v5zM1264.2 67.6l3.2-3l3.2 3zM1264.2 599.8l3.2 3l3.2-3z" fill="#111"/></svg>
<div class="tip"><div class="h">平移</div>
<div class="r" style="top:22.5px">      LB<span class="c">平移</span></div>
<div class="r" style="top:36.5px">Shif +LB<span class="c">重置中心</span></div>
<div class="r" style="top:48.5px">t</div>
<div class="r" style="top:61.7px">Ctrl +LB<span class="c">缩放</span></div>
<div class="r" style="top:75.7px">Ctrl +RB<span class="c">平移</span></div>
<div class="r" style="top:89.8px">      WL<span class="c">缩放</span></div>
</div>
</body></html>
